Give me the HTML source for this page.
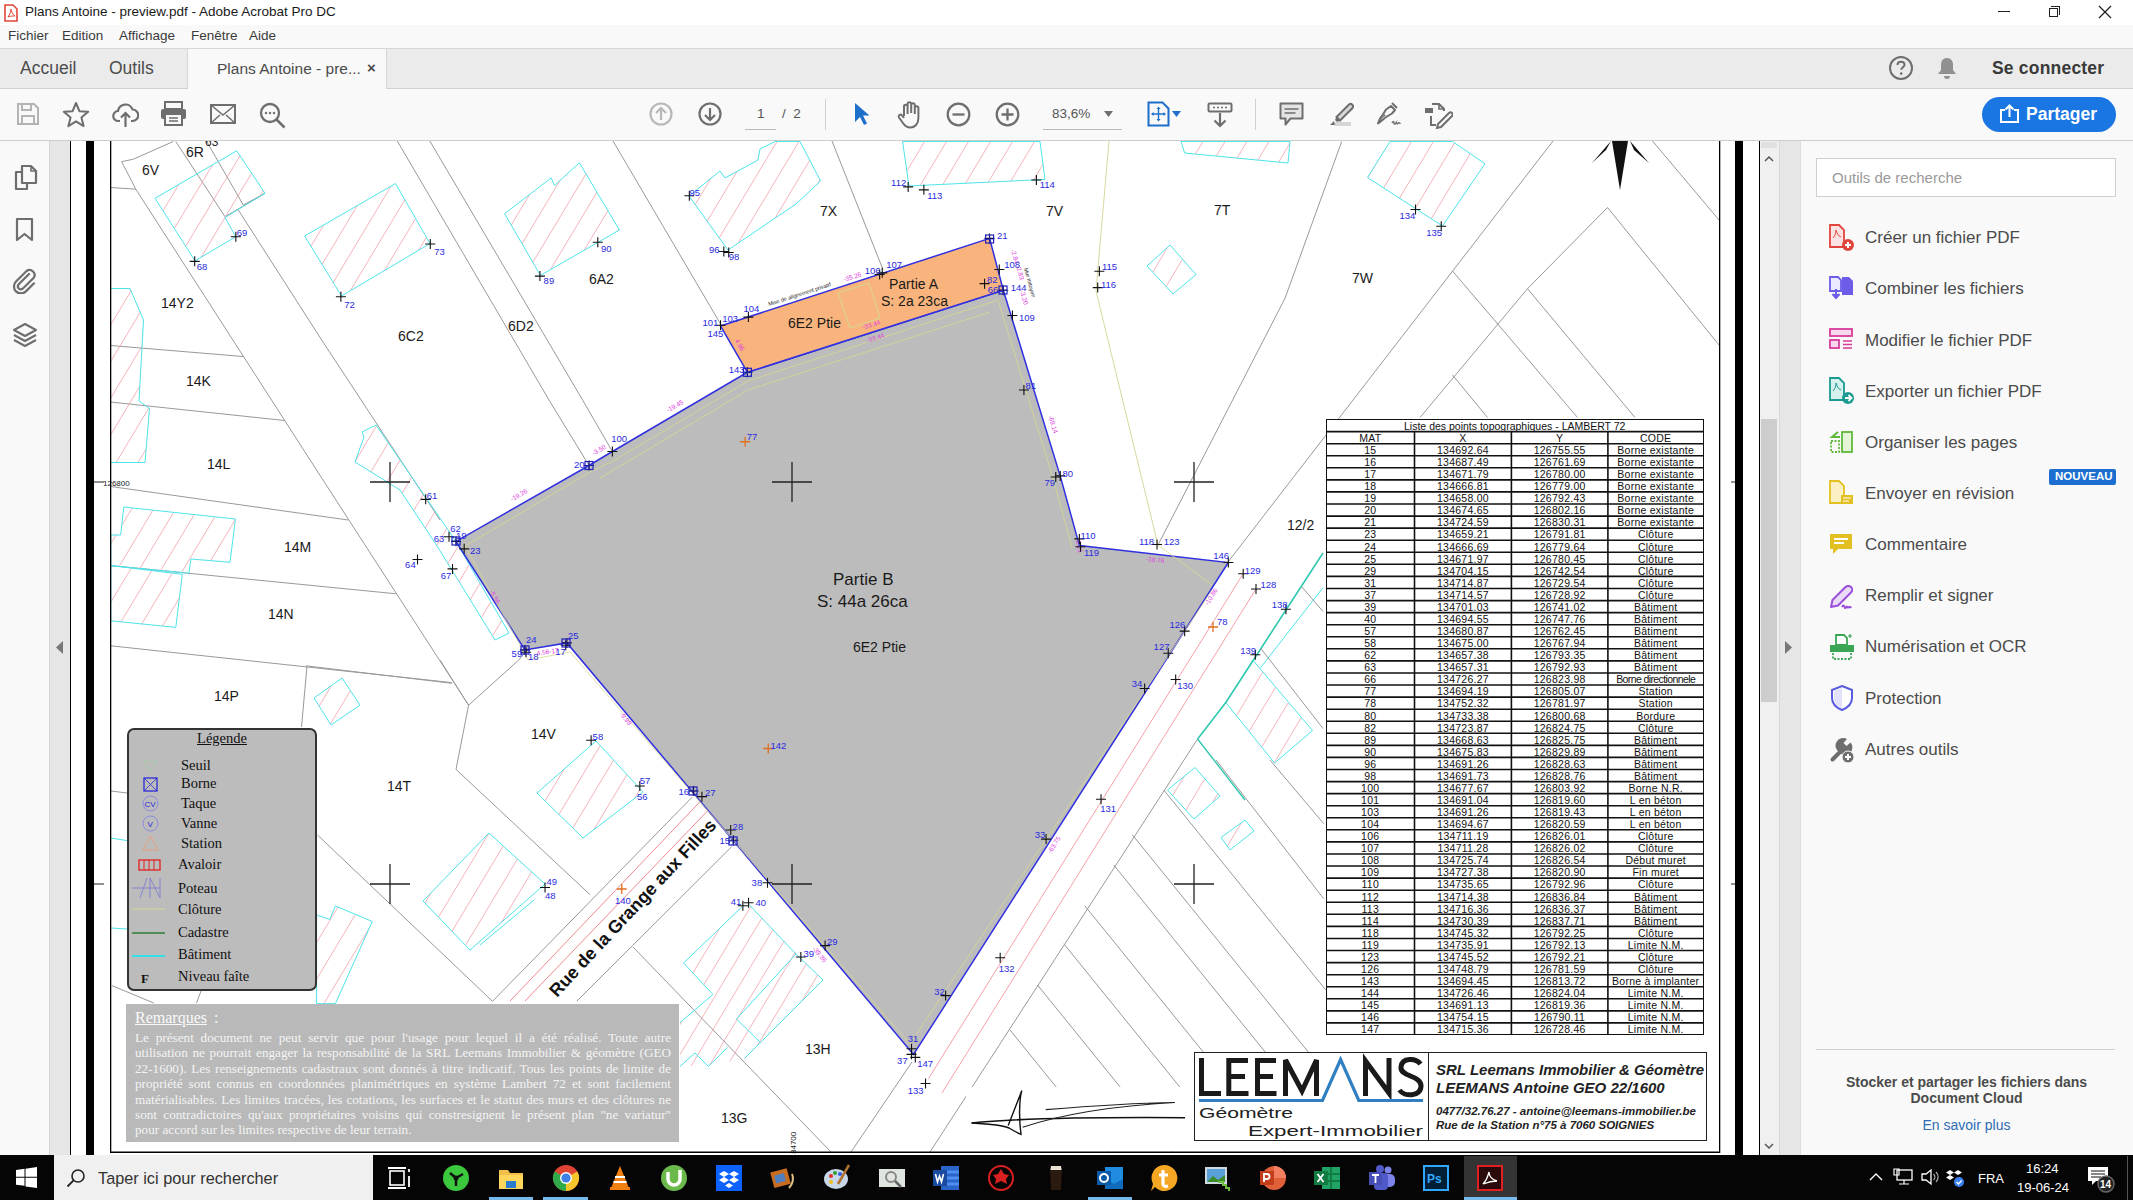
<!DOCTYPE html><html><head><meta charset="utf-8"><style>
*{margin:0;padding:0;box-sizing:border-box}
html,body{width:2133px;height:1200px;overflow:hidden;background:#f8f8f8;font-family:"Liberation Sans",sans-serif;color:#2c2c2c}
.abs{position:absolute}
.t{position:absolute;white-space:nowrap;line-height:1}

</style></head><body>
<div class="abs" style="left:0;top:0;width:2133px;height:25px;background:#ffffff"></div>
<svg class="abs" style="left:3px;top:4px" width="16" height="18" viewBox="0 0 16 18">
<path d="M2 1h8l4 4v12H2z" fill="#fff" stroke="#e0463b" stroke-width="1.6"/>
<path d="M5 13c2-3 3-6 3-8 0 2 2 6 4 7-2 0-5 0-7 1z" fill="none" stroke="#e0463b" stroke-width="1"/></svg>
<div class="t" style="left:25px;top:5px;font-size:13.5px;color:#1a1a1a">Plans Antoine - preview.pdf - Adobe Acrobat Pro DC</div>
<div class="abs" style="left:1998px;top:11px;width:12px;height:1px;background:#222"></div>
<div class="abs" style="left:2049px;top:8px;width:9px;height:9px;border:1px solid #222"></div>
<div class="abs" style="left:2051px;top:6px;width:9px;height:9px;border-top:1px solid #222;border-right:1px solid #222"></div>
<svg class="abs" style="left:2098px;top:5px" width="14" height="14"><path d="M1 1L13 13M13 1L1 13" stroke="#222" stroke-width="1.3"/></svg>
<div class="abs" style="left:0;top:25px;width:2133px;height:23px;background:#f9f9f9"></div>
<div class="t" style="left:8px;top:29px;font-size:13.5px;color:#3b3b3b">Fichier</div>
<div class="t" style="left:62px;top:29px;font-size:13.5px;color:#3b3b3b">Edition</div>
<div class="t" style="left:119px;top:29px;font-size:13.5px;color:#3b3b3b">Affichage</div>
<div class="t" style="left:191px;top:29px;font-size:13.5px;color:#3b3b3b">Fenêtre</div>
<div class="t" style="left:249px;top:29px;font-size:13.5px;color:#3b3b3b">Aide</div>
<div class="abs" style="left:0;top:48px;width:2133px;height:41px;background:#ebebeb;border-top:1px solid #d6d6d6;border-bottom:1px solid #d0d0d0"></div>
<div class="abs" style="left:187px;top:49px;width:200px;height:40px;background:#f9f9f9;border-left:1px solid #d6d6d6;border-right:1px solid #d6d6d6"></div>
<div class="t" style="left:20px;top:60px;font-size:17.5px;color:#4b4b4b">Accueil</div>
<div class="t" style="left:109px;top:60px;font-size:17.5px;color:#4b4b4b">Outils</div>
<div class="t" style="left:217px;top:61px;font-size:15.5px;color:#4b4b4b">Plans Antoine - pre...</div>
<div class="t" style="left:367px;top:60px;font-size:15px;color:#4b4b4b;font-weight:bold">×</div>
<svg class="abs" style="left:1888px;top:55px" width="26" height="26" viewBox="0 0 26 26">
<circle cx="13" cy="13" r="11" fill="none" stroke="#6e6e6e" stroke-width="2"/>
<path d="M9.5 10c0-2 1.5-3.3 3.5-3.3s3.5 1.3 3.5 3.1c0 2.4-3.3 2.4-3.3 5" fill="none" stroke="#6e6e6e" stroke-width="2"/>
<circle cx="13.2" cy="18.6" r="1.3" fill="#6e6e6e"/></svg>
<svg class="abs" style="left:1936px;top:56px" width="22" height="24" viewBox="0 0 22 24">
<path d="M11 2c-4 0-6 3-6 7v5l-3 4h18l-3-4V9c0-4-2-7-6-7z" fill="#909090"/><path d="M8 20a3 3 0 0 0 6 0z" fill="#909090"/></svg>
<div class="t" style="left:1992px;top:60px;font-size:17.5px;color:#3a3a3a;font-weight:bold;letter-spacing:0.2px">Se connecter</div>
<div class="abs" style="left:0;top:89px;width:2133px;height:52px;background:#f9f9f9;border-bottom:1px solid #cdcdcd"></div>
<svg class="abs" style="left:16px;top:102px" width="24" height="24" viewBox="0 0 24 24">
<path d="M2 2h16l4 4v16H2z" fill="none" stroke="#b4b4b4" stroke-width="2"/>
<rect x="6" y="2" width="9" height="6" fill="none" stroke="#b4b4b4" stroke-width="2"/>
<rect x="6" y="14" width="12" height="8" fill="none" stroke="#b4b4b4" stroke-width="2"/></svg>
<svg class="abs" style="left:62px;top:101px" width="28" height="27" viewBox="0 0 28 27">
<path d="M14 2l3.4 8.2 8.8.6-6.8 5.7 2.2 8.6L14 20.4 6.4 25.1l2.2-8.6L1.8 10.8l8.8-.6z" fill="none" stroke="#6e6e6e" stroke-width="2" stroke-linejoin="round"/></svg>
<svg class="abs" style="left:112px;top:102px" width="27" height="26" viewBox="0 0 27 26">
<path d="M8 19H6.5a5 5 0 0 1-.5-10 7.5 7.5 0 0 1 14.5-1.5A5.5 5.5 0 0 1 20.5 19H19" fill="none" stroke="#6e6e6e" stroke-width="2.2"/>
<path d="M13.5 25V11M9 15.5l4.5-4.5 4.5 4.5" fill="none" stroke="#6e6e6e" stroke-width="2.2"/></svg>
<svg class="abs" style="left:160px;top:101px" width="27" height="25" viewBox="0 0 27 25">
<rect x="5" y="1" width="17" height="7" fill="none" stroke="#6e6e6e" stroke-width="2"/>
<rect x="1" y="8" width="25" height="10" rx="2" fill="#6e6e6e"/>
<rect x="5" y="13" width="17" height="11" fill="#f9f9f9" stroke="#6e6e6e" stroke-width="2"/>
<path d="M9 17h9M9 20h9" stroke="#6e6e6e" stroke-width="1.3"/></svg>
<svg class="abs" style="left:210px;top:104px" width="26" height="20" viewBox="0 0 26 20">
<rect x="1" y="1" width="24" height="18" fill="none" stroke="#6e6e6e" stroke-width="2"/>
<path d="M1 1l12 10 12-10M1 19l9-8M25 19l-9-8" fill="none" stroke="#6e6e6e" stroke-width="1.5"/></svg>
<svg class="abs" style="left:259px;top:102px" width="27" height="27" viewBox="0 0 27 27">
<circle cx="11" cy="11" r="9" fill="none" stroke="#6e6e6e" stroke-width="2.3"/>
<path d="M17.5 17.5l8 8" stroke="#6e6e6e" stroke-width="2.5"/>
<circle cx="7" cy="11" r="1.2" fill="#6e6e6e"/><circle cx="11" cy="11" r="1.2" fill="#6e6e6e"/><circle cx="15" cy="11" r="1.2" fill="#6e6e6e"/></svg>
<svg class="abs" style="left:649px;top:102px" width="24" height="24" viewBox="0 0 24 24">
<circle cx="12" cy="12" r="10.5" fill="none" stroke="#b8b8b8" stroke-width="2.2"/>
<path d="M12 18V6M7 11l5-5 5 5" fill="none" stroke="#b8b8b8" stroke-width="2.2"/></svg>
<svg class="abs" style="left:698px;top:102px" width="24" height="24" viewBox="0 0 24 24">
<circle cx="12" cy="12" r="10.5" fill="none" stroke="#6e6e6e" stroke-width="2.2"/>
<path d="M12 6v12M7 13l5 5 5-5" fill="none" stroke="#6e6e6e" stroke-width="2.2"/></svg>
<div class="t" style="left:757px;top:107px;font-size:13.5px;color:#555">1</div>
<div class="abs" style="left:745px;top:129px;width:31px;height:1px;background:#bbb"></div>
<div class="t" style="left:782px;top:107px;font-size:13.5px;color:#555">/&nbsp; 2</div>
<div class="abs" style="left:825px;top:99px;width:1px;height:31px;background:#d0d0d0"></div>
<svg class="abs" style="left:853px;top:102px" width="17" height="24" viewBox="0 0 17 24">
<path d="M2 1v19l5-5 4 8 3-1.5-4-8h6.5z" fill="#1e6fc9"/></svg>
<svg class="abs" style="left:897px;top:101px" width="27" height="28" viewBox="0 0 27 28">
<path d="M7 15V5.5a1.8 1.8 0 0 1 3.6 0V13M10.6 12V3a1.8 1.8 0 0 1 3.6 0v9M14.2 12V4a1.8 1.8 0 0 1 3.6 0v8.5M17.8 13V7a1.8 1.8 0 0 1 3.6 0v10c0 6-3.5 9.5-8 9.5-3.5 0-5.5-1.5-7.5-4.5L2 16.5a1.8 1.8 0 0 1 3-2L7 17" fill="none" stroke="#6e6e6e" stroke-width="2" stroke-linejoin="round"/></svg>
<svg class="abs" style="left:946px;top:102px" width="25" height="25" viewBox="0 0 25 25">
<circle cx="12.5" cy="12.5" r="10.8" fill="none" stroke="#6e6e6e" stroke-width="2.2"/><path d="M6.5 12.5h12" stroke="#6e6e6e" stroke-width="2.3"/></svg>
<svg class="abs" style="left:995px;top:102px" width="25" height="25" viewBox="0 0 25 25">
<circle cx="12.5" cy="12.5" r="10.8" fill="none" stroke="#6e6e6e" stroke-width="2.2"/><path d="M6.5 12.5h12M12.5 6.5v12" stroke="#6e6e6e" stroke-width="2.3"/></svg>
<div class="t" style="left:1052px;top:107px;font-size:13.5px;color:#555">83,6%</div>
<svg class="abs" style="left:1104px;top:111px" width="10" height="7"><path d="M0 0h9l-4.5 6z" fill="#6e6e6e"/></svg>
<div class="abs" style="left:1043px;top:129px;width:79px;height:1px;background:#bbb"></div>
<svg class="abs" style="left:1147px;top:101px" width="24" height="26" viewBox="0 0 24 26">
<path d="M1.5 1.5h14l6 6v17h-20z" fill="none" stroke="#1e6fc9" stroke-width="2"/>
<path d="M11.5 7v12M5.5 13h12" stroke="#1e6fc9" stroke-width="1.4"/>
<path d="M11.5 5.5l-2 2.5h4zM11.5 20.5l-2-2.5h4zM4 13l2.5-2v4zM19 13l-2.5-2v4z" fill="#1e6fc9"/></svg>
<svg class="abs" style="left:1172px;top:111px" width="10" height="7"><path d="M0 0h9l-4.5 6z" fill="#1e6fc9"/></svg>
<svg class="abs" style="left:1207px;top:102px" width="26" height="26" viewBox="0 0 26 26">
<rect x="1.5" y="1.5" width="23" height="8" rx="1" fill="none" stroke="#6e6e6e" stroke-width="2"/>
<path d="M6 5.5h2M10 5.5h2M14 5.5h2M18 5.5h2" stroke="#6e6e6e" stroke-width="1.6"/>
<path d="M13 11v13M7.5 18.5l5.5 5.5 5.5-5.5" fill="none" stroke="#6e6e6e" stroke-width="2.2"/></svg>
<div class="abs" style="left:1255px;top:99px;width:1px;height:31px;background:#d0d0d0"></div>
<svg class="abs" style="left:1279px;top:102px" width="25" height="26" viewBox="0 0 25 26">
<path d="M1.5 1.5h22v15h-12l-5 6v-6h-5z" fill="#e4e4e4" stroke="#6e6e6e" stroke-width="2" stroke-linejoin="round"/>
<path d="M5.5 7h14M5.5 11h11" stroke="#6e6e6e" stroke-width="1.5"/></svg>
<svg class="abs" style="left:1327px;top:102px" width="27" height="26" viewBox="0 0 27 26">
<rect x="8" y="20" width="16" height="4" fill="#d6d6d6"/>
<path d="M22 2.5a2.5 2.5 0 0 1 3.5 3.5L13 18.5l-3.5-3.5z" fill="#d9d9d9" stroke="#6e6e6e" stroke-width="2"/>
<path d="M9.5 15l3.5 3.5-3 1.5-2-2zM7 19l-4 4h5z" fill="#6e6e6e"/></svg>
<svg class="abs" style="left:1375px;top:101px" width="28" height="26" viewBox="0 0 28 26">
<path d="M17 2l5 5" stroke="#6e6e6e" stroke-width="2"/>
<path d="M16 5l4 4-3 3.5-5 3c-3 2-6 5-9 7 1-3 3-7 5-9l3-5z" fill="none" stroke="#6e6e6e" stroke-width="2" stroke-linejoin="round"/>
<circle cx="9.5" cy="14.5" r="1" fill="#6e6e6e"/><path d="M3 22l6-7" stroke="#6e6e6e" stroke-width="1"/>
<path d="M17 22c1-2 2-2 2 0 0 2 1.5 1 2.5-0.5 0 1.5 1 1.5 2 0.5s1 1 2 0" fill="none" stroke="#6e6e6e" stroke-width="1.4"/></svg>
<svg class="abs" style="left:1424px;top:101px" width="29" height="29" viewBox="0 0 29 29">
<path d="M8 3h7l5 5v2" fill="none" stroke="#6e6e6e" stroke-width="2"/>
<path d="M15 3v5h5" fill="none" stroke="#6e6e6e" stroke-width="1.6"/>
<rect x="1" y="7" width="8" height="5" fill="#6e6e6e"/>
<path d="M7 15v9h5" fill="none" stroke="#6e6e6e" stroke-width="2"/>
<path d="M25 12a2 2 0 0 1 3 3L17 26l-4 1 1-4z" fill="none" stroke="#6e6e6e" stroke-width="2"/></svg>
<div class="abs" style="left:1982px;top:97px;width:134px;height:35px;border-radius:18px;background:#1a76e2"></div>
<svg class="abs" style="left:1999px;top:104px" width="21" height="19" viewBox="0 0 21 19">
<path d="M6 6H2v12h17V6h-4" fill="none" stroke="#fff" stroke-width="2"/>
<path d="M10.5 13V1.5M6.5 5.5l4-4 4 4" fill="none" stroke="#fff" stroke-width="2"/></svg>
<div class="t" style="left:2026px;top:106px;font-size:17.5px;color:#fff;font-weight:bold">Partager</div>
<div class="abs" style="left:0;top:141px;width:50px;height:1014px;background:#f9f9f9;border-right:1px solid #d4d4d4"></div>
<div class="abs" style="left:50px;top:141px;width:20px;height:1014px;background:#e6e6e6"></div>
<svg class="abs" style="left:56px;top:641px" width="8" height="13"><path d="M7 0v13L0 6.5z" fill="#777"/></svg>
<svg class="abs" style="left:14px;top:164px" width="24" height="27" viewBox="0 0 24 27">
<path d="M8 2h9l5 5v12H8z" fill="none" stroke="#6e6e6e" stroke-width="2.2" stroke-linejoin="round"/>
<path d="M17 2v5h5" fill="none" stroke="#6e6e6e" stroke-width="1.6"/>
<path d="M8 8H2v17h11v-6" fill="none" stroke="#6e6e6e" stroke-width="2.2" stroke-linejoin="round"/></svg>
<svg class="abs" style="left:15px;top:217px" width="20" height="26" viewBox="0 0 20 26">
<path d="M2 2h15v21l-7.5-6L2 23z" fill="none" stroke="#6e6e6e" stroke-width="2.2" stroke-linejoin="round"/></svg>
<svg class="abs" style="left:12px;top:268px" width="26" height="26" viewBox="0 0 26 26">
<path d="M17 6L6.5 16.5a3 3 0 0 0 4.2 4.2L21.5 10a5 5 0 0 0-7-7L4 13.5a7 7 0 0 0 9.9 9.9L22 15.3" fill="none" stroke="#6e6e6e" stroke-width="2.2" stroke-linecap="round"/></svg>
<svg class="abs" style="left:12px;top:322px" width="26" height="26" viewBox="0 0 26 26">
<path d="M13 2L2 8l11 6 11-6z" fill="none" stroke="#6e6e6e" stroke-width="2" stroke-linejoin="round"/>
<path d="M2 13l11 6 11-6M2 18l11 6 11-6" fill="none" stroke="#6e6e6e" stroke-width="2" stroke-linejoin="round"/></svg>
<svg class="abs" style="left:70px;top:141px" width="1690" height="1014" viewBox="70 141 1690 1014"><rect x="70" y="141" width="1690" height="1014" fill="#fff"/><path d="M135.8,189.2 L323,480 L468.6,705.2" fill="none" stroke="#999999" stroke-width="1" /><path d="M121.7,161.7 L133.3,159.2 L173.3,141.5" fill="none" stroke="#999999" stroke-width="1" /><path d="M121.7,161.7 L135.8,189.2" fill="none" stroke="#999999" stroke-width="1" /><path d="M110.8,187.5 L135.8,189.2" fill="none" stroke="#999999" stroke-width="1" /><path d="M175.8,141.5 L225,216.7 L265,193.3 L243.3,205" fill="none" stroke="#999999" stroke-width="1" /><path d="M206.7,141.5 L243.3,205" fill="none" stroke="#999999" stroke-width="1" /><path d="M238.3,210 L321.7,340 L440,520" fill="none" stroke="#999999" stroke-width="1" /><path d="M397.3,141 L549,400 L589,465.5" fill="none" stroke="#999999" stroke-width="1" /><path d="M429.8,141 L582.6,400 L612.4,451.5" fill="none" stroke="#999999" stroke-width="1" /><path d="M613,141 L721.3,325.3" fill="none" stroke="#999999" stroke-width="1" /><path d="M832,141 L883,269.6" fill="none" stroke="#999999" stroke-width="1" /><path d="M1109,141 L1096,291 L1158,545" fill="none" stroke="#d8d8a0" stroke-width="1" /><path d="M1341.7,141.5 L1285,298.3 L1158,545" fill="none" stroke="#999999" stroke-width="1" /><path d="M1553,141 L1228,562" fill="none" stroke="#999999" stroke-width="1" /><path d="M1652.5,141 L1719,220" fill="none" stroke="#999999" stroke-width="1" /><path d="M1607.5,207.5 L1719,345" fill="none" stroke="#999999" stroke-width="1" /><path d="M1607.5,207.5 L1527.5,288.7 L1420,417.5" fill="none" stroke="#999999" stroke-width="1" /><path d="M1527.5,288.7 L1635,417.5" fill="none" stroke="#999999" stroke-width="1" /><path d="M1452.5,271 L1577.5,417.5" fill="none" stroke="#999999" stroke-width="1" /><path d="M1452.5,375 L1487.5,417.5" fill="none" stroke="#999999" stroke-width="1" /><path d="M110.5,345.5 L244,356.6" fill="none" stroke="#999999" stroke-width="1" /><path d="M110.5,402 L284.5,420.5" fill="none" stroke="#999999" stroke-width="1" /><path d="M110.8,486.5 L348,520" fill="none" stroke="#999999" stroke-width="1" /><path d="M110.8,565.6 L395.8,593.75" fill="none" stroke="#999999" stroke-width="1" /><path d="M110.8,645.8 L452,682.6" fill="none" stroke="#999999" stroke-width="1" /><path d="M307,666 L301.5,727" fill="none" stroke="#999999" stroke-width="1" /><path d="M305.8,665.8 L451.7,683.3" fill="none" stroke="#999999" stroke-width="1" /><path d="M440,660 L468.6,705.2 L518.8,660 L527,650" fill="none" stroke="#999999" stroke-width="1" /><path d="M468.6,705.2 L456,769.4 L590.2,894.8" fill="none" stroke="#999999" stroke-width="1" /><path d="M317.5,835 L492.5,1001.3" fill="none" stroke="#999999" stroke-width="1" /><path d="M492.5,1001.3 L692.3,797" fill="none" stroke="#999999" stroke-width="1" /><path d="M577,1001 L731.7,846.7" fill="none" stroke="#999999" stroke-width="1" /><path d="M633,947 L831,1152" fill="none" stroke="#999999" stroke-width="1" /><path d="M1197.6,739 L930,1152" fill="none" stroke="#999999" stroke-width="1" /><path d="M1163.75,790 L1326,990.3086419753087" fill="none" stroke="#999999" stroke-width="1" /><path d="M1132.5,835 L1326,1073.888888888889" fill="none" stroke="#999999" stroke-width="1" /><path d="M1113.75,865 L1326,1127.037037037037" fill="none" stroke="#999999" stroke-width="1" /><path d="M1085,906 L1284.26,1152" fill="none" stroke="#999999" stroke-width="1" /><path d="M1063.75,943.75 L1232.4325,1152" fill="none" stroke="#999999" stroke-width="1" /><path d="M1037.5,985 L1172.77,1152" fill="none" stroke="#999999" stroke-width="1" /><path d="M1010,1030 L1108.82,1152" fill="none" stroke="#999999" stroke-width="1" /><path d="M1216,760 L1323.75,898.75" fill="none" stroke="#999999" stroke-width="1" /><path d="M1270,760 L1323.75,823.75" fill="none" stroke="#999999" stroke-width="1" /><path d="M912,1062 L851,1152" fill="none" stroke="#999999" stroke-width="1" /><clipPath id="c45"><path d="M155,198.3 L236.7,150.8 L265,193.3 L225,217.5 L235.8,236.7 L195,260.8Z"/></clipPath><path d="M89.0,260.8 L155.0,150.8 M111.0,260.8 L177.0,150.8 M133.0,260.8 L199.0,150.8 M155.0,260.8 L221.0,150.8 M177.0,260.8 L243.0,150.8 M199.0,260.8 L265.0,150.8 M221.0,260.8 L287.0,150.8 M243.0,260.8 L309.0,150.8" stroke="#f4a0a8" stroke-width="0.8" clip-path="url(#c45)"/><path d="M155,198.3 L236.7,150.8 L265,193.3 L225,217.5 L235.8,236.7 L195,260.8Z" fill="none" stroke="#4de4ea" stroke-width="1.0"/><clipPath id="c48"><path d="M304.6,236 L395.5,183.5 L430,243.5 L341.5,296Z"/></clipPath><path d="M237.1,296 L304.6,183.5 M259.1,296 L326.6,183.5 M281.1,296 L348.6,183.5 M303.1,296 L370.6,183.5 M325.1,296 L392.6,183.5 M347.1,296 L414.6,183.5 M369.1,296 L436.6,183.5 M391.1,296 L458.6,183.5 M413.1,296 L480.6,183.5" stroke="#f4a0a8" stroke-width="0.8" clip-path="url(#c48)"/><path d="M304.6,236 L395.5,183.5 L430,243.5 L341.5,296Z" fill="none" stroke="#4de4ea" stroke-width="1.0"/><clipPath id="c51"><path d="M504.6,213.7 L551.2,177.9 L554.5,185.5 L579.4,162.8 L619.4,230 L540.4,275.4Z"/></clipPath><path d="M437.0,275.4 L504.6,162.8 M459.0,275.4 L526.6,162.8 M481.0,275.4 L548.6,162.8 M503.0,275.4 L570.6,162.8 M525.0,275.4 L592.6,162.8 M547.0,275.4 L614.6,162.8 M569.0,275.4 L636.6,162.8 M591.0,275.4 L658.6,162.8 M613.0,275.4 L680.6,162.8" stroke="#f4a0a8" stroke-width="0.8" clip-path="url(#c51)"/><path d="M504.6,213.7 L551.2,177.9 L554.5,185.5 L579.4,162.8 L619.4,230 L540.4,275.4Z" fill="none" stroke="#4de4ea" stroke-width="1.0"/><clipPath id="c54"><path d="M689,196 L720,171 L725,178 L758,160 L760,149 L775,141.5 L800,141.5 L820.6,181 L796,204 L728,250Z"/></clipPath><path d="M623.9,250 L689.0,141.5 M645.9,250 L711.0,141.5 M667.9,250 L733.0,141.5 M689.9,250 L755.0,141.5 M711.9,250 L777.0,141.5 M733.9,250 L799.0,141.5 M755.9,250 L821.0,141.5 M777.9,250 L843.0,141.5 M799.9,250 L865.0,141.5" stroke="#f4a0a8" stroke-width="0.8" clip-path="url(#c54)"/><path d="M689,196 L720,171 L725,178 L758,160 L760,149 L775,141.5 L800,141.5 L820.6,181 L796,204 L728,250Z" fill="none" stroke="#4de4ea" stroke-width="1.0"/><clipPath id="c57"><path d="M902.6,141.5 L909,186 L1045,179.4 L1040,141.5Z"/></clipPath><path d="M875.9,186 L902.6,141.5 M897.9,186 L924.6,141.5 M919.9,186 L946.6,141.5 M941.9,186 L968.6,141.5 M963.9,186 L990.6,141.5 M985.9,186 L1012.6,141.5 M1007.9,186 L1034.6,141.5 M1029.9,186 L1056.6,141.5" stroke="#f4a0a8" stroke-width="0.8" clip-path="url(#c57)"/><path d="M902.6,141.5 L909,186 L1045,179.4 L1040,141.5Z" fill="none" stroke="#4de4ea" stroke-width="1.0"/><clipPath id="c60"><path d="M1181,141.5 L1184.6,153 L1288,163 L1290,141.5Z"/></clipPath><path d="M1168.1,163 L1181.0,141.5 M1190.1,163 L1203.0,141.5 M1212.1,163 L1225.0,141.5 M1234.1,163 L1247.0,141.5 M1256.1,163 L1269.0,141.5 M1278.1,163 L1291.0,141.5" stroke="#f4a0a8" stroke-width="0.8" clip-path="url(#c60)"/><path d="M1181,141.5 L1184.6,153 L1288,163 L1290,141.5Z" fill="none" stroke="#4de4ea" stroke-width="1.0"/><clipPath id="c63"><path d="M1147,266 L1170,245 L1196,274.5 L1173,294Z"/></clipPath><path d="M1117.6,294 L1147.0,245 M1139.6,294 L1169.0,245 M1161.6,294 L1191.0,245 M1183.6,294 L1213.0,245" stroke="#f4a0a8" stroke-width="0.8" clip-path="url(#c63)"/><path d="M1147,266 L1170,245 L1196,274.5 L1173,294Z" fill="none" stroke="#4de4ea" stroke-width="1.0"/><clipPath id="c66"><path d="M1367.5,177.5 L1390,141.5 L1452.5,141.5 L1485,163.75 L1442.5,226Z"/></clipPath><path d="M1316.8,226 L1367.5,141.5 M1338.8,226 L1389.5,141.5 M1360.8,226 L1411.5,141.5 M1382.8,226 L1433.5,141.5 M1404.8,226 L1455.5,141.5 M1426.8,226 L1477.5,141.5 M1448.8,226 L1499.5,141.5 M1470.8,226 L1521.5,141.5" stroke="#f4a0a8" stroke-width="0.8" clip-path="url(#c66)"/><path d="M1367.5,177.5 L1390,141.5 L1452.5,141.5 L1485,163.75 L1442.5,226Z" fill="none" stroke="#4de4ea" stroke-width="1.0"/><clipPath id="c69"><path d="M110.5,288.5 L130,288.5 L143.5,320 L139,401 L149.5,408.5 L145,462.5 L110.5,462.5Z"/></clipPath><path d="M6.1,462.5 L110.5,288.5 M28.1,462.5 L132.5,288.5 M50.1,462.5 L154.5,288.5 M72.1,462.5 L176.5,288.5 M94.1,462.5 L198.5,288.5 M116.1,462.5 L220.5,288.5 M138.1,462.5 L242.5,288.5" stroke="#f4a0a8" stroke-width="0.8" clip-path="url(#c69)"/><path d="M110.5,288.5 L130,288.5 L143.5,320 L139,401 L149.5,408.5 L145,462.5 L110.5,462.5Z" fill="none" stroke="#4de4ea" stroke-width="1.0"/><clipPath id="c72"><path d="M110.8,535 L120.6,535 L123.8,507 L235.4,519 L230,562.3 L191,559 L188.8,573.2 L110.8,565.6Z"/></clipPath><path d="M71.1,573.2 L110.8,507 M93.1,573.2 L132.8,507 M115.1,573.2 L154.8,507 M137.1,573.2 L176.8,507 M159.1,573.2 L198.8,507 M181.1,573.2 L220.8,507 M203.1,573.2 L242.8,507 M225.1,573.2 L264.8,507" stroke="#f4a0a8" stroke-width="0.8" clip-path="url(#c72)"/><path d="M110.8,535 L120.6,535 L123.8,507 L235.4,519 L230,562.3 L191,559 L188.8,573.2 L110.8,565.6Z" fill="none" stroke="#4de4ea" stroke-width="1.0"/><clipPath id="c75"><path d="M110.8,565.6 L182.3,574.3 L175.8,627.4 L110.8,620.8Z"/></clipPath><path d="M73.7,627.4 L110.8,565.6 M95.7,627.4 L132.8,565.6 M117.7,627.4 L154.8,565.6 M139.7,627.4 L176.8,565.6 M161.7,627.4 L198.8,565.6" stroke="#f4a0a8" stroke-width="0.8" clip-path="url(#c75)"/><path d="M110.8,565.6 L182.3,574.3 L175.8,627.4 L110.8,620.8Z" fill="none" stroke="#4de4ea" stroke-width="1.0"/><clipPath id="c78"><path d="M355,462 L364,437 L362,432 L376,425 L455,540 L509,633 L495,640 L437,546 L400,490Z"/></clipPath><path d="M226.0,640 L355.0,425 M248.0,640 L377.0,425 M270.0,640 L399.0,425 M292.0,640 L421.0,425 M314.0,640 L443.0,425 M336.0,640 L465.0,425 M358.0,640 L487.0,425 M380.0,640 L509.0,425 M402.0,640 L531.0,425 M424.0,640 L553.0,425 M446.0,640 L575.0,425 M468.0,640 L597.0,425 M490.0,640 L619.0,425" stroke="#f4a0a8" stroke-width="0.8" clip-path="url(#c78)"/><path d="M355,462 L364,437 L362,432 L376,425 L455,540 L509,633 L495,640 L437,546 L400,490Z" fill="none" stroke="#4de4ea" stroke-width="1.0"/><clipPath id="c81"><path d="M314,698 L342,678 L360,705 L331,725Z"/></clipPath><path d="M285.8,725 L314.0,678 M307.8,725 L336.0,678 M329.8,725 L358.0,678 M351.8,725 L380.0,678" stroke="#f4a0a8" stroke-width="0.8" clip-path="url(#c81)"/><path d="M314,698 L342,678 L360,705 L331,725Z" fill="none" stroke="#4de4ea" stroke-width="1.0"/><clipPath id="c84"><path d="M537,793 L596,741 L643,792 L583,838Z"/></clipPath><path d="M478.8,838 L537.0,741 M500.8,838 L559.0,741 M522.8,838 L581.0,741 M544.8,838 L603.0,741 M566.8,838 L625.0,741 M588.8,838 L647.0,741 M610.8,838 L669.0,741 M632.8,838 L691.0,741" stroke="#f4a0a8" stroke-width="0.8" clip-path="url(#c84)"/><path d="M537,793 L596,741 L643,792 L583,838Z" fill="none" stroke="#4de4ea" stroke-width="1.0"/><clipPath id="c87"><path d="M423,901 L489,833 L545,884 L470,950Z"/></clipPath><path d="M352.8,950 L423.0,833 M374.8,950 L445.0,833 M396.8,950 L467.0,833 M418.8,950 L489.0,833 M440.8,950 L511.0,833 M462.8,950 L533.0,833 M484.8,950 L555.0,833 M506.8,950 L577.0,833 M528.8,950 L599.0,833" stroke="#f4a0a8" stroke-width="0.8" clip-path="url(#c87)"/><path d="M423,901 L489,833 L545,884 L470,950Z" fill="none" stroke="#4de4ea" stroke-width="1.0"/><path d="M111,838 L127,840.6" fill="none" stroke="#4de4ea" stroke-width="1" /><path d="M111,928 L127,929" fill="none" stroke="#4de4ea" stroke-width="1" /><path d="M111,791 L127,793" fill="none" stroke="#999999" stroke-width="1" /><path d="M111.9,985.6 L153.8,1003" fill="none" stroke="#999999" stroke-width="1" /><path d="M196.5,1003 L201,991" fill="none" stroke="#999999" stroke-width="1" /><clipPath id="c95"><path d="M316.6,915 L329.8,919.4 L335.4,905.9 L372.3,921.5 L335.4,1003.7 L316.6,1003.7Z"/></clipPath><path d="M257.9,1003.7 L316.6,905.9 M279.9,1003.7 L338.6,905.9 M301.9,1003.7 L360.6,905.9 M323.9,1003.7 L382.6,905.9 M345.9,1003.7 L404.6,905.9 M367.9,1003.7 L426.6,905.9" stroke="#f4a0a8" stroke-width="0.8" clip-path="url(#c95)"/><path d="M316.6,915 L329.8,919.4 L335.4,905.9 L372.3,921.5 L335.4,1003.7 L316.6,1003.7Z" fill="none" stroke="#4de4ea" stroke-width="1.0"/><clipPath id="c98"><path d="M742,906 L683.6,963 L712.9,994.5 L680,1022.6 L680,1066 L708,1066 L744.4,1058.6 L823,980 L749,904.5Z"/></clipPath><path d="M583.1,1066 L680.0,904.5 M601.1,1066 L698.0,904.5 M619.1,1066 L716.0,904.5 M637.1,1066 L734.0,904.5 M655.1,1066 L752.0,904.5 M673.1,1066 L770.0,904.5 M691.1,1066 L788.0,904.5 M709.1,1066 L806.0,904.5 M727.1,1066 L824.0,904.5 M745.1,1066 L842.0,904.5 M763.1,1066 L860.0,904.5 M781.1,1066 L878.0,904.5 M799.1,1066 L896.0,904.5 M817.1,1066 L914.0,904.5" stroke="#f4a0a8" stroke-width="0.8" clip-path="url(#c98)"/><path d="M742,906.8 L683.6,963 L712.9,994.5 L680,1022.6" fill="none" stroke="#4de4ea" stroke-width="1" /><path d="M680,1066.5 L695,1053 L708.4,1066.5 L727.5,1047.4" fill="none" stroke="#4de4ea" stroke-width="1" /><path d="M749,904.5 L796,954 L736.5,1019 L761,1043" fill="none" stroke="#4de4ea" stroke-width="1" /><path d="M796,954 L823,980 L744.4,1058.6" fill="none" stroke="#4de4ea" stroke-width="1" /><path d="M480,945 L534,900" fill="none" stroke="#4de4ea" stroke-width="1" /><clipPath id="c105"><path d="M1167.5,790 L1195,767.5 L1220,796 L1194,819Z"/></clipPath><path d="M1136.6,819 L1167.5,767.5 M1158.6,819 L1189.5,767.5 M1180.6,819 L1211.5,767.5 M1202.6,819 L1233.5,767.5" stroke="#f4a0a8" stroke-width="0.8" clip-path="url(#c105)"/><path d="M1167.5,790 L1195,767.5 L1220,796 L1194,819Z" fill="none" stroke="#4de4ea" stroke-width="1.0"/><clipPath id="c108"><path d="M1221,837.5 L1245,820 L1254,831 L1230,850Z"/></clipPath><path d="M1203.0,850 L1221.0,820 M1225.0,850 L1243.0,820 M1247.0,850 L1265.0,820" stroke="#f4a0a8" stroke-width="0.8" clip-path="url(#c108)"/><path d="M1221,837.5 L1245,820 L1254,831 L1230,850Z" fill="none" stroke="#4de4ea" stroke-width="1.0"/><clipPath id="c111"><path d="M1252.9,660.2 L1312.5,730.6 L1274.5,763 L1225.8,702.5Z"/></clipPath><path d="M1164.1,763 L1225.8,660.2 M1186.1,763 L1247.8,660.2 M1208.1,763 L1269.8,660.2 M1230.1,763 L1291.8,660.2 M1252.1,763 L1313.8,660.2 M1274.1,763 L1335.8,660.2 M1296.1,763 L1357.8,660.2" stroke="#f4a0a8" stroke-width="0.8" clip-path="url(#c111)"/><path d="M1252.9,660.2 L1312.5,730.6 L1274.5,763 L1225.8,702.5Z" fill="none" stroke="#4de4ea" stroke-width="1.0"/><path d="M1323,553 L1225.8,702.5 L1197.6,739" fill="none" stroke="#30c8b0" stroke-width="1.6" /><path d="M1197.6,739 L1245,800" fill="none" stroke="#30c8b0" stroke-width="1.4" /><path d="M1323,587.6 L1260.5,667.8" fill="none" stroke="#4de4ea" stroke-width="1" /><path d="M1260.5,648 L1323,728.5" fill="none" stroke="#999999" stroke-width="1" /><path d="M1301.6,586.6 L1323,611.5" fill="none" stroke="#999999" stroke-width="1" /><path d="M510,1001 L735,765" fill="none" stroke="#f08a90" stroke-width="1" /><path d="M525,1001 L742,775" fill="none" stroke="#f08a90" stroke-width="1" /><path d="M928.5,1078.6 L1243,574" fill="none" stroke="#f4a0a8" stroke-width="1" /><path d="M942,1093 L1256,589" fill="none" stroke="#f4a0a8" stroke-width="1" /><path d="M747.4,372.3 L1003.3,290.2 L1060.2,475.9 L1079.4,545.6 L1228.3,562.5 L913.5,1054.5 L566.9,642.9 L524.9,649.9 L456,541.4 L589,465.5 L612.4,451.5Z" fill="#bcbcbc" stroke="#3030e0" stroke-width="1.5"/><path d="M615,460 L748,381 L998,300 L1053,478 L1072,548" fill="none" stroke="#d8d890" stroke-width="0.8" /><path d="M1158,545 L1212,585" fill="none" stroke="#d8d890" stroke-width="0.8" /><path d="M1212,590 L910,1044 L570,652 L528,660 L465,546 L590,472 L615,460" fill="none" stroke="#d8d890" stroke-width="0.8" /><path d="M600,478 L748,390 L990,312" fill="none" stroke="#d8d890" stroke-width="0.8" /><path d="M989.6,238.4 L1003.3,290.2 L747.4,372.3 L720.5,326Z" fill="#f8b47c" stroke="#3030e0" stroke-width="1.5"/><path d="M838,293 L869,283 L880,318 L850,328Z" fill="none" stroke="#d8d890" stroke-width="1"/><text x="0" y="0" font-size="6.5" fill="#e03ce0" font-family='"Liberation Sans",sans-serif' text-anchor="middle" transform="translate(520,497) rotate(-30)">-19.26</text><text x="0" y="0" font-size="6.5" fill="#e03ce0" font-family='"Liberation Sans",sans-serif' text-anchor="middle" transform="translate(600,452) rotate(-30)">-3.50</text><text x="0" y="0" font-size="6.5" fill="#e03ce0" font-family='"Liberation Sans",sans-serif' text-anchor="middle" transform="translate(676,408) rotate(-30)">-19.45</text><text x="0" y="0" font-size="6.5" fill="#e03ce0" font-family='"Liberation Sans",sans-serif' text-anchor="middle" transform="translate(853,279) rotate(-18)">-35.26</text><text x="0" y="0" font-size="6.5" fill="#e03ce0" font-family='"Liberation Sans",sans-serif' text-anchor="middle" transform="translate(872,327) rotate(-18)">-33.44</text><text x="0" y="0" font-size="6.5" fill="#e03ce0" font-family='"Liberation Sans",sans-serif' text-anchor="middle" transform="translate(876,340) rotate(-18)">-33.44</text><text x="0" y="0" font-size="6.5" fill="#e03ce0" font-family='"Liberation Sans",sans-serif' text-anchor="middle" transform="translate(738,346) rotate(60)">4.96</text><text x="0" y="0" font-size="6.5" fill="#e03ce0" font-family='"Liberation Sans",sans-serif' text-anchor="middle" transform="translate(1013,257) rotate(73)">-2.84</text><text x="0" y="0" font-size="6.5" fill="#e03ce0" font-family='"Liberation Sans",sans-serif' text-anchor="middle" transform="translate(1018,273) rotate(73)">-2.83</text><text x="0" y="0" font-size="6.5" fill="#e03ce0" font-family='"Liberation Sans",sans-serif' text-anchor="middle" transform="translate(1022,298) rotate(73)">-3.20</text><text x="0" y="0" font-size="6.5" fill="#e03ce0" font-family='"Liberation Sans",sans-serif' text-anchor="middle" transform="translate(1051,425) rotate(73)">-69.14</text><text x="0" y="0" font-size="6.5" fill="#e03ce0" font-family='"Liberation Sans",sans-serif' text-anchor="middle" transform="translate(1155,562) rotate(6)">-18.76</text><text x="0" y="0" font-size="6.5" fill="#e03ce0" font-family='"Liberation Sans",sans-serif' text-anchor="middle" transform="translate(1213,598) rotate(-57)">-10.86</text><text x="0" y="0" font-size="6.5" fill="#e03ce0" font-family='"Liberation Sans",sans-serif' text-anchor="middle" transform="translate(1056,846) rotate(-57)">-63.75</text><text x="0" y="0" font-size="6.5" fill="#e03ce0" font-family='"Liberation Sans",sans-serif' text-anchor="middle" transform="translate(818,956) rotate(50)">-39.86</text><text x="0" y="0" font-size="6.5" fill="#e03ce0" font-family='"Liberation Sans",sans-serif' text-anchor="middle" transform="translate(624,720) rotate(50)">-9.98</text><text x="0" y="0" font-size="6.5" fill="#e03ce0" font-family='"Liberation Sans",sans-serif' text-anchor="middle" transform="translate(493,598) rotate(58)">-5.56</text><text x="0" y="0" font-size="6.5" fill="#e03ce0" font-family='"Liberation Sans",sans-serif' text-anchor="middle" transform="translate(548,654) rotate(-8)">4.56-17</text><text x="0" y="0" font-size="6.5" fill="#e03ce0" font-family='"Liberation Sans",sans-serif' text-anchor="middle" transform="translate(1077,546) rotate(80)">-2.21</text><text x="0" y="0" font-size="5.5" fill="#222" font-family='"Liberation Sans",sans-serif' text-anchor="middle" transform="translate(800,296) rotate(-18)">Mise de alignement privatif</text><text x="0" y="0" font-size="5.5" fill="#222" font-family='"Liberation Sans",sans-serif' text-anchor="middle" transform="translate(1028,283) rotate(75)">Mur mitoyen</text><text x="889" y="289" font-size="14" fill="#1a1a1a" font-family='"Liberation Sans",sans-serif' >Partie A</text><text x="881" y="306" font-size="14" fill="#1a1a1a" font-family='"Liberation Sans",sans-serif' >S: 2a 23ca</text><text x="788" y="328" font-size="14" fill="#1a1a1a" font-family='"Liberation Sans",sans-serif' >6E2 Ptie</text><text x="833" y="585" font-size="17" fill="#1a1a1a" font-family='"Liberation Sans",sans-serif' >Partie B</text><text x="817" y="607" font-size="17" fill="#1a1a1a" font-family='"Liberation Sans",sans-serif' >S: 44a 26ca</text><text x="853" y="652" font-size="14" fill="#1a1a1a" font-family='"Liberation Sans",sans-serif' >6E2 Ptie</text><text x="142" y="175" font-size="14" fill="#1a1a1a" font-family='"Liberation Sans",sans-serif' >6V</text><text x="186" y="157" font-size="14" fill="#1a1a1a" font-family='"Liberation Sans",sans-serif' >6R</text><text x="161" y="308" font-size="14" fill="#1a1a1a" font-family='"Liberation Sans",sans-serif' >14Y2</text><text x="186" y="386" font-size="14" fill="#1a1a1a" font-family='"Liberation Sans",sans-serif' >14K</text><text x="207" y="469" font-size="14" fill="#1a1a1a" font-family='"Liberation Sans",sans-serif' >14L</text><text x="284" y="552" font-size="14" fill="#1a1a1a" font-family='"Liberation Sans",sans-serif' >14M</text><text x="268" y="619" font-size="14" fill="#1a1a1a" font-family='"Liberation Sans",sans-serif' >14N</text><text x="214" y="701" font-size="14" fill="#1a1a1a" font-family='"Liberation Sans",sans-serif' >14P</text><text x="387" y="791" font-size="14" fill="#1a1a1a" font-family='"Liberation Sans",sans-serif' >14T</text><text x="531" y="739" font-size="14" fill="#1a1a1a" font-family='"Liberation Sans",sans-serif' >14V</text><text x="398" y="341" font-size="14" fill="#1a1a1a" font-family='"Liberation Sans",sans-serif' >6C2</text><text x="508" y="331" font-size="14" fill="#1a1a1a" font-family='"Liberation Sans",sans-serif' >6D2</text><text x="589" y="284" font-size="14" fill="#1a1a1a" font-family='"Liberation Sans",sans-serif' >6A2</text><text x="820" y="216" font-size="14" fill="#1a1a1a" font-family='"Liberation Sans",sans-serif' >7X</text><text x="1046" y="216" font-size="14" fill="#1a1a1a" font-family='"Liberation Sans",sans-serif' >7V</text><text x="1214" y="215" font-size="14" fill="#1a1a1a" font-family='"Liberation Sans",sans-serif' >7T</text><text x="1352" y="283" font-size="14" fill="#1a1a1a" font-family='"Liberation Sans",sans-serif' >7W</text><text x="1287" y="530" font-size="14" fill="#1a1a1a" font-family='"Liberation Sans",sans-serif' >12/2</text><text x="805" y="1054" font-size="14" fill="#1a1a1a" font-family='"Liberation Sans",sans-serif' >13H</text><text x="721" y="1123" font-size="14" fill="#1a1a1a" font-family='"Liberation Sans",sans-serif' >13G</text><text x="205" y="146" font-size="12" fill="#1a1a1a" font-family='"Liberation Sans",sans-serif' >63</text><path d="M370,482H410M390,462V502" stroke="#222" stroke-width="1.3"/><path d="M772,482H812M792,462V502" stroke="#222" stroke-width="1.3"/><path d="M1174,482H1214M1194,462V502" stroke="#222" stroke-width="1.3"/><path d="M370,884H410M390,864V904" stroke="#222" stroke-width="1.3"/><path d="M772,884H812M792,864V904" stroke="#222" stroke-width="1.3"/><path d="M1174,884H1214M1194,864V904" stroke="#222" stroke-width="1.3"/><path d="M94,482H104M1731,482H1743M94,884H104M1731,884H1743" stroke="#222" stroke-width="1"/><text x="103" y="486" font-size="8" fill="#222" font-family='"Liberation Sans",sans-serif' >126800</text><path d="M684.36,195.76H694.36M689.36,190.76V200.76" stroke="#111" stroke-width="1.1"/><text x="689.4" y="195.8" font-size="9.5" fill="#2a2ae0" font-family='"Liberation Sans",sans-serif' >95</text><path d="M718.8,251.52H728.8M723.8,246.52V256.52" stroke="#111" stroke-width="1.1"/><text x="709.0" y="253.2" font-size="9.5" fill="#2a2ae0" font-family='"Liberation Sans",sans-serif' >96</text><path d="M723.72,252.50400000000002H733.72M728.72,247.50400000000002V257.504" stroke="#111" stroke-width="1.1"/><text x="728.7" y="259.7" font-size="9.5" fill="#2a2ae0" font-family='"Liberation Sans",sans-serif' >98</text><path d="M903.136,186.904H913.136M908.136,181.904V191.904" stroke="#111" stroke-width="1.1"/><text x="891.1" y="185.9" font-size="9.5" fill="#2a2ae0" font-family='"Liberation Sans",sans-serif' >112</text><path d="M918.88,189.856H928.88M923.88,184.856V194.856" stroke="#111" stroke-width="1.1"/><text x="927.2" y="199.0" font-size="9.5" fill="#2a2ae0" font-family='"Liberation Sans",sans-serif' >113</text><path d="M1031.384,180.016H1041.384M1036.384,175.016V185.016" stroke="#111" stroke-width="1.1"/><text x="1039.7" y="187.6" font-size="9.5" fill="#2a2ae0" font-family='"Liberation Sans",sans-serif' >114</text><path d="M984.48,238.4H994.48M989.48,233.4V243.4" stroke="#111" stroke-width="1.1"/><text x="997.0" y="239.4" font-size="9.5" fill="#2a2ae0" font-family='"Liberation Sans",sans-serif' >21</text><path d="M877.224,272.84000000000003H887.224M882.224,267.84000000000003V277.84000000000003" stroke="#111" stroke-width="1.1"/><text x="886.2" y="267.9" font-size="9.5" fill="#2a2ae0" font-family='"Liberation Sans",sans-serif' >107</text><path d="M874.6,274.48H884.6M879.6,269.48V279.48" stroke="#111" stroke-width="1.1"/><text x="864.8" y="273.5" font-size="9.5" fill="#2a2ae0" font-family='"Liberation Sans",sans-serif' >106</text><path d="M743.4,317.12H753.4M748.4,312.12V322.12" stroke="#111" stroke-width="1.1"/><text x="743.5" y="312.2" font-size="9.5" fill="#2a2ae0" font-family='"Liberation Sans",sans-serif' >104</text><path d="M715.52,325.32000000000005H725.52M720.52,320.32000000000005V330.32000000000005" stroke="#111" stroke-width="1.1"/><text x="722.2" y="322.0" font-size="9.5" fill="#2a2ae0" font-family='"Liberation Sans",sans-serif' >103</text><text x="702.5" y="326.3" font-size="9.5" fill="#2a2ae0" font-family='"Liberation Sans",sans-serif' >101</text><text x="707.4" y="336.8" font-size="9.5" fill="#2a2ae0" font-family='"Liberation Sans",sans-serif' >145</text><path d="M742.416,372.22400000000005H752.416M747.416,367.22400000000005V377.22400000000005" stroke="#111" stroke-width="1.1"/><text x="728.7" y="372.9" font-size="9.5" fill="#2a2ae0" font-family='"Liberation Sans",sans-serif' >143</text><path d="M994.3199999999999,269.56H1004.3199999999999M999.3199999999999,264.56V274.56" stroke="#111" stroke-width="1.1"/><text x="1004.2" y="267.9" font-size="9.5" fill="#2a2ae0" font-family='"Liberation Sans",sans-serif' >108</text><path d="M979.56,283.664H989.56M984.56,278.664V288.664" stroke="#111" stroke-width="1.1"/><text x="986.9" y="282.7" font-size="9.5" fill="#2a2ae0" font-family='"Liberation Sans",sans-serif' >82</text><path d="M998.2560000000001,290.22400000000005H1008.2560000000001M1003.2560000000001,285.22400000000005V295.22400000000005" stroke="#111" stroke-width="1.1"/><text x="987.8" y="292.5" font-size="9.5" fill="#2a2ae0" font-family='"Liberation Sans",sans-serif' >66</text><text x="1010.8" y="290.9" font-size="9.5" fill="#2a2ae0" font-family='"Liberation Sans",sans-serif' >144</text><path d="M1007.44,315.48H1017.44M1012.44,310.48V320.48" stroke="#111" stroke-width="1.1"/><text x="1019.0" y="321.1" font-size="9.5" fill="#2a2ae0" font-family='"Liberation Sans",sans-serif' >109</text><path d="M1018.9200000000001,389.93600000000004H1028.92M1023.9200000000001,384.93600000000004V394.93600000000004" stroke="#111" stroke-width="1.1"/><text x="1025.6" y="389.3" font-size="9.5" fill="#2a2ae0" font-family='"Liberation Sans",sans-serif' >81</text><path d="M1094.3600000000001,271.20000000000005H1104.3600000000001M1099.3600000000001,266.20000000000005V276.20000000000005" stroke="#111" stroke-width="1.1"/><text x="1102.0" y="269.6" font-size="9.5" fill="#2a2ae0" font-family='"Liberation Sans",sans-serif' >115</text><path d="M1092.72,287.6H1102.72M1097.72,282.6V292.6" stroke="#111" stroke-width="1.1"/><text x="1101.0" y="287.6" font-size="9.5" fill="#2a2ae0" font-family='"Liberation Sans",sans-serif' >116</text><path d="M740.12,441.76H750.12M745.12,436.76V446.76" stroke="#e07020" stroke-width="1.3"/><text x="746.8" y="440.1" font-size="9.5" fill="#2a2ae0" font-family='"Liberation Sans",sans-serif' >77</text><path d="M1055.25,475.875H1065.25M1060.25,470.875V480.875" stroke="#111" stroke-width="1.1"/><text x="1062.5" y="477.0" font-size="9.5" fill="#2a2ae0" font-family='"Liberation Sans",sans-serif' >80</text><path d="M1050.75,477.0H1060.75M1055.75,472.0V482.0" stroke="#111" stroke-width="1.1"/><text x="1044.5" y="486.0" font-size="9.5" fill="#2a2ae0" font-family='"Liberation Sans",sans-serif' >79</text><path d="M1074.375,538.875H1084.375M1079.375,533.875V543.875" stroke="#111" stroke-width="1.1"/><text x="1080.5" y="538.9" font-size="9.5" fill="#2a2ae0" font-family='"Liberation Sans",sans-serif' >110</text><path d="M1075.5,546.75H1085.5M1080.5,541.75V551.75" stroke="#111" stroke-width="1.1"/><text x="1083.9" y="555.8" font-size="9.5" fill="#2a2ae0" font-family='"Liberation Sans",sans-serif' >119</text><path d="M1152.0,544.5H1162.0M1157.0,539.5V549.5" stroke="#111" stroke-width="1.1"/><text x="1139.0" y="544.5" font-size="9.5" fill="#2a2ae0" font-family='"Liberation Sans",sans-serif' >118</text><text x="1163.8" y="544.5" font-size="9.5" fill="#2a2ae0" font-family='"Liberation Sans",sans-serif' >123</text><path d="M1223.325,562.5H1233.325M1228.325,557.5V567.5" stroke="#111" stroke-width="1.1"/><text x="1213.2" y="559.1" font-size="9.5" fill="#2a2ae0" font-family='"Liberation Sans",sans-serif' >146</text><path d="M1238.175,573.75H1248.175M1243.175,568.75V578.75" stroke="#111" stroke-width="1.1"/><text x="1244.8" y="573.8" font-size="9.5" fill="#2a2ae0" font-family='"Liberation Sans",sans-serif' >129</text><path d="M1251.0,589.05H1261.0M1256.0,584.05V594.05" stroke="#111" stroke-width="1.1"/><text x="1260.5" y="588.4" font-size="9.5" fill="#2a2ae0" font-family='"Liberation Sans",sans-serif' >128</text><path d="M1280.925,609.3H1290.925M1285.925,604.3V614.3" stroke="#111" stroke-width="1.1"/><text x="1271.8" y="607.5" font-size="9.5" fill="#2a2ae0" font-family='"Liberation Sans",sans-serif' >138</text><path d="M1179.675,631.125H1189.675M1184.675,626.125V636.125" stroke="#111" stroke-width="1.1"/><text x="1169.4" y="627.8" font-size="9.5" fill="#2a2ae0" font-family='"Liberation Sans",sans-serif' >126</text><path d="M1163.25,653.175H1173.25M1168.25,648.175V658.175" stroke="#111" stroke-width="1.1"/><text x="1153.6" y="649.8" font-size="9.5" fill="#2a2ae0" font-family='"Liberation Sans",sans-serif' >127</text><path d="M1250.325,654.75H1260.325M1255.325,649.75V659.75" stroke="#111" stroke-width="1.1"/><text x="1240.2" y="653.6" font-size="9.5" fill="#2a2ae0" font-family='"Liberation Sans",sans-serif' >139</text><path d="M1139.625,688.5H1149.625M1144.625,683.5V693.5" stroke="#111" stroke-width="1.1"/><text x="1131.8" y="686.7" font-size="9.5" fill="#2a2ae0" font-family='"Liberation Sans",sans-serif' >34</text><path d="M1170.675,679.5H1180.675M1175.675,674.5V684.5" stroke="#111" stroke-width="1.1"/><text x="1177.2" y="689.2" font-size="9.5" fill="#2a2ae0" font-family='"Liberation Sans",sans-serif' >130</text><path d="M607.394,451.509H617.394M612.394,446.509V456.509" stroke="#111" stroke-width="1.1"/><text x="611.2" y="442.2" font-size="9.5" fill="#2a2ae0" font-family='"Liberation Sans",sans-serif' >100</text><path d="M584.054,465.513H594.054M589.054,460.513V470.513" stroke="#111" stroke-width="1.1"/><text x="573.9" y="467.8" font-size="9.5" fill="#2a2ae0" font-family='"Liberation Sans",sans-serif' >20</text><path d="M420.674,499.356H430.674M425.674,494.356V504.356" stroke="#111" stroke-width="1.1"/><text x="426.8" y="499.4" font-size="9.5" fill="#2a2ae0" font-family='"Liberation Sans",sans-serif' >61</text><path d="M444.014,536.7H454.014M449.014,531.7V541.7" stroke="#111" stroke-width="1.1"/><text x="450.2" y="532.0" font-size="9.5" fill="#2a2ae0" font-family='"Liberation Sans",sans-serif' >62</text><text x="433.8" y="541.8" font-size="9.5" fill="#2a2ae0" font-family='"Liberation Sans",sans-serif' >63</text><path d="M451.016,541.3679999999999H461.016M456.016,536.3679999999999V546.3679999999999" stroke="#111" stroke-width="1.1"/><text x="456.0" y="539.0" font-size="9.5" fill="#2a2ae0" font-family='"Liberation Sans",sans-serif' >19</text><path d="M459.185,548.8368H469.185M464.185,543.8368V553.8368" stroke="#111" stroke-width="1.1"/><text x="470.0" y="554.2" font-size="9.5" fill="#2a2ae0" font-family='"Liberation Sans",sans-serif' >23</text><path d="M412.505,559.5732H422.505M417.505,554.5732V564.5732" stroke="#111" stroke-width="1.1"/><text x="405.1" y="568.2" font-size="9.5" fill="#2a2ae0" font-family='"Liberation Sans",sans-serif' >64</text><path d="M447.515,568.9092H457.515M452.515,563.9092V573.9092" stroke="#111" stroke-width="1.1"/><text x="440.8" y="578.7" font-size="9.5" fill="#2a2ae0" font-family='"Liberation Sans",sans-serif' >67</text><path d="M519.869,649.899H529.869M524.869,644.899V654.899" stroke="#111" stroke-width="1.1"/><text x="526.0" y="642.9" font-size="9.5" fill="#2a2ae0" font-family='"Liberation Sans",sans-serif' >24</text><text x="511.6" y="656.9" font-size="9.5" fill="#2a2ae0" font-family='"Liberation Sans",sans-serif' >59</text><path d="M521.0360000000001,652.233H531.0360000000001M526.0360000000001,647.233V657.233" stroke="#111" stroke-width="1.1"/><text x="527.9" y="660.4" font-size="9.5" fill="#2a2ae0" font-family='"Liberation Sans",sans-serif' >18</text><path d="M560.7139999999999,645.231H570.7139999999999M565.7139999999999,640.231V650.231" stroke="#111" stroke-width="1.1"/><text x="555.2" y="654.6" font-size="9.5" fill="#2a2ae0" font-family='"Liberation Sans",sans-serif' >17</text><path d="M561.881,642.8969999999999H571.881M566.881,637.8969999999999V647.8969999999999" stroke="#111" stroke-width="1.1"/><text x="568.0" y="639.4" font-size="9.5" fill="#2a2ae0" font-family='"Liberation Sans",sans-serif' >25</text><path d="M763.248,748.512H773.248M768.248,743.512V753.512" stroke="#e07020" stroke-width="1.3"/><text x="770.5" y="749.3" font-size="9.5" fill="#2a2ae0" font-family='"Liberation Sans",sans-serif' >142</text><path d="M688.585,790.96H698.585M693.585,785.96V795.96" stroke="#111" stroke-width="1.1"/><text x="678.4" y="794.8" font-size="9.5" fill="#2a2ae0" font-family='"Liberation Sans",sans-serif' >16</text><path d="M696.923,796.645H706.923M701.923,791.645V801.645" stroke="#111" stroke-width="1.1"/><text x="705.0" y="795.9" font-size="9.5" fill="#2a2ae0" font-family='"Liberation Sans",sans-serif' >27</text><path d="M725.727,829.9970000000001H735.727M730.727,824.9970000000001V834.9970000000001" stroke="#111" stroke-width="1.1"/><text x="732.6" y="830.0" font-size="9.5" fill="#2a2ae0" font-family='"Liberation Sans",sans-serif' >28</text><path d="M728.38,840.23H738.38M733.38,835.23V845.23" stroke="#111" stroke-width="1.1"/><text x="719.4" y="844.0" font-size="9.5" fill="#2a2ae0" font-family='"Liberation Sans",sans-serif' >15</text><path d="M762.49,882.678H772.49M767.49,877.678V887.678" stroke="#111" stroke-width="1.1"/><text x="751.6" y="885.7" font-size="9.5" fill="#2a2ae0" font-family='"Liberation Sans",sans-serif' >38</text><path d="M737.855,905.797H747.855M742.855,900.797V910.797" stroke="#111" stroke-width="1.1"/><text x="730.7" y="904.7" font-size="9.5" fill="#2a2ae0" font-family='"Liberation Sans",sans-serif' >41</text><path d="M743.54,902.765H753.54M748.54,897.765V907.765" stroke="#111" stroke-width="1.1"/><text x="755.4" y="905.8" font-size="9.5" fill="#2a2ae0" font-family='"Liberation Sans",sans-serif' >40</text><path d="M820.098,945.592H830.098M825.098,940.592V950.592" stroke="#111" stroke-width="1.1"/><text x="827.0" y="945.2" font-size="9.5" fill="#2a2ae0" font-family='"Liberation Sans",sans-serif' >29</text><path d="M795.842,956.962H805.842M800.842,951.962V961.962" stroke="#111" stroke-width="1.1"/><text x="803.5" y="956.6" font-size="9.5" fill="#2a2ae0" font-family='"Liberation Sans",sans-serif' >39</text><path d="M1041.055,839.093H1051.055M1046.055,834.093V844.093" stroke="#111" stroke-width="1.1"/><text x="1034.7" y="837.6" font-size="9.5" fill="#2a2ae0" font-family='"Liberation Sans",sans-serif' >33</text><path d="M1096.01,799.298H1106.01M1101.01,794.298V804.298" stroke="#111" stroke-width="1.1"/><text x="1100.3" y="811.8" font-size="9.5" fill="#2a2ae0" font-family='"Liberation Sans",sans-serif' >131</text><path d="M995.196,957.72H1005.196M1000.196,952.72V962.72" stroke="#111" stroke-width="1.1"/><text x="998.7" y="971.7" font-size="9.5" fill="#2a2ae0" font-family='"Liberation Sans",sans-serif' >132</text><path d="M940.62,995.62H950.62M945.62,990.62V1000.62" stroke="#111" stroke-width="1.1"/><text x="934.2" y="994.9" font-size="9.5" fill="#2a2ae0" font-family='"Liberation Sans",sans-serif' >32</text><path d="M906.51,1048.68H916.51M911.51,1043.68V1053.68" stroke="#111" stroke-width="1.1"/><text x="907.7" y="1042.2" font-size="9.5" fill="#2a2ae0" font-family='"Liberation Sans",sans-serif' >31</text><path d="M906.51,1054.365H916.51M911.51,1049.365V1059.365" stroke="#111" stroke-width="1.1"/><text x="897.1" y="1063.8" font-size="9.5" fill="#2a2ae0" font-family='"Liberation Sans",sans-serif' >37</text><path d="M910.3,1057.397H920.3M915.3,1052.397V1062.397" stroke="#111" stroke-width="1.1"/><text x="917.2" y="1066.9" font-size="9.5" fill="#2a2ae0" font-family='"Liberation Sans",sans-serif' >147</text><path d="M920.533,1083.548H930.533M925.533,1078.548V1088.548" stroke="#111" stroke-width="1.1"/><text x="907.7" y="1094.2" font-size="9.5" fill="#2a2ae0" font-family='"Liberation Sans",sans-serif' >133</text><path d="M586.1166000000001,740.2175H596.1166000000001M591.1166000000001,735.2175V745.2175" stroke="#111" stroke-width="1.1"/><text x="592.6" y="740.2" font-size="9.5" fill="#2a2ae0" font-family='"Liberation Sans",sans-serif' >58</text><path d="M634.8305,786.0144H644.8305M639.8305,781.0144V791.0144" stroke="#111" stroke-width="1.1"/><text x="639.8" y="784.0" font-size="9.5" fill="#2a2ae0" font-family='"Liberation Sans",sans-serif' >57</text><text x="636.9" y="800.0" font-size="9.5" fill="#2a2ae0" font-family='"Liberation Sans",sans-serif' >56</text><path d="M540.028,887.5260000000001H550.028M545.028,882.5260000000001V892.5260000000001" stroke="#111" stroke-width="1.1"/><text x="546.5" y="884.6" font-size="9.5" fill="#2a2ae0" font-family='"Liberation Sans",sans-serif' >49</text><text x="545.0" y="899.2" font-size="9.5" fill="#2a2ae0" font-family='"Liberation Sans",sans-serif' >48</text><path d="M616.7451000000001,888.9845H626.7451000000001M621.7451000000001,883.9845V893.9845" stroke="#e07020" stroke-width="1.3"/><text x="615.0" y="903.6" font-size="9.5" fill="#2a2ae0" font-family='"Liberation Sans",sans-serif' >140</text><path d="M230.8605,236.68599999999998H240.8605M235.8605,231.68599999999998V241.68599999999998" stroke="#111" stroke-width="1.1"/><text x="236.7" y="235.9" font-size="9.5" fill="#2a2ae0" font-family='"Liberation Sans",sans-serif' >69</text><path d="M189.6856,261.3576H199.6856M194.6856,256.3576V266.3576" stroke="#111" stroke-width="1.1"/><text x="196.7" y="270.0" font-size="9.5" fill="#2a2ae0" font-family='"Liberation Sans",sans-serif' >68</text><path d="M335.88149999999996,296.698H345.88149999999996M340.88149999999996,291.698V301.698" stroke="#111" stroke-width="1.1"/><text x="344.2" y="307.5" font-size="9.5" fill="#2a2ae0" font-family='"Liberation Sans",sans-serif' >72</text><path d="M425.2744,244.01600000000002H435.2744M430.2744,239.01600000000002V249.01600000000002" stroke="#111" stroke-width="1.1"/><text x="434.2" y="254.9" font-size="9.5" fill="#2a2ae0" font-family='"Liberation Sans",sans-serif' >73</text><path d="M534.9246,276.0876H544.9246M539.9246,271.0876V281.0876" stroke="#111" stroke-width="1.1"/><text x="543.6" y="284.1" font-size="9.5" fill="#2a2ae0" font-family='"Liberation Sans",sans-serif' >89</text><path d="M592.7835,242.2824H602.7835M597.7835,237.2824V247.2824" stroke="#111" stroke-width="1.1"/><text x="601.0" y="251.6" font-size="9.5" fill="#2a2ae0" font-family='"Liberation Sans",sans-serif' >90</text><path d="M1410.5,209.5H1420.5M1415.5,204.5V214.5" stroke="#111" stroke-width="1.1"/><text x="1399.5" y="218.8" font-size="9.5" fill="#2a2ae0" font-family='"Liberation Sans",sans-serif' >134</text><path d="M1436.25,226.25H1446.25M1441.25,221.25V231.25" stroke="#111" stroke-width="1.1"/><text x="1426.2" y="236.2" font-size="9.5" fill="#2a2ae0" font-family='"Liberation Sans",sans-serif' >135</text><path d="M1208,627H1218M1213,622V632" stroke="#e07020" stroke-width="1.3"/><text x="1217" y="625" font-size="9.5" fill="#2a2ae0" font-family='"Liberation Sans",sans-serif' >78</text><rect x="985.6" y="235" width="8" height="8" fill="none" stroke="#2020c0" stroke-width="1.2"/><path d="M985.6,239H993.6M989.6,235V243" stroke="#2020c0" stroke-width="0.8"/><rect x="999" y="286" width="8" height="8" fill="none" stroke="#2020c0" stroke-width="1.2"/><path d="M999,290H1007M1003,286V294" stroke="#2020c0" stroke-width="0.8"/><rect x="743.4" y="368.3" width="8" height="8" fill="none" stroke="#2020c0" stroke-width="1.2"/><path d="M743.4,372.3H751.4M747.4,368.3V376.3" stroke="#2020c0" stroke-width="0.8"/><rect x="585" y="461.5" width="8" height="8" fill="none" stroke="#2020c0" stroke-width="1.2"/><path d="M585,465.5H593M589,461.5V469.5" stroke="#2020c0" stroke-width="0.8"/><rect x="452" y="537" width="8" height="8" fill="none" stroke="#2020c0" stroke-width="1.2"/><path d="M452,541H460M456,537V545" stroke="#2020c0" stroke-width="0.8"/><rect x="521" y="646" width="8" height="8" fill="none" stroke="#2020c0" stroke-width="1.2"/><path d="M521,650H529M525,646V654" stroke="#2020c0" stroke-width="0.8"/><rect x="562" y="639" width="8" height="8" fill="none" stroke="#2020c0" stroke-width="1.2"/><path d="M562,643H570M566,639V647" stroke="#2020c0" stroke-width="0.8"/><rect x="689" y="787" width="8" height="8" fill="none" stroke="#2020c0" stroke-width="1.2"/><path d="M689,791H697M693,787V795" stroke="#2020c0" stroke-width="0.8"/><rect x="729" y="837" width="8" height="8" fill="none" stroke="#2020c0" stroke-width="1.2"/><path d="M729,841H737M733,837V845" stroke="#2020c0" stroke-width="0.8"/><text x="0" y="0" font-size="18" font-family='"Liberation Sans",sans-serif' fill="#111" font-weight="bold" transform="translate(557,998) rotate(-47)">Rue de la Grange aux Filles</text><path d="M1620,190 L1612,141 L1628,141 Z" fill="#111"/><path d="M1592,163 L1611,141 L1606,150 Z M1649,163 L1630,141 L1634,150 Z" fill="#111"/><text x="0" y="0" font-size="8" fill="#222" font-family='"Liberation Sans",sans-serif' transform="translate(796,1154) rotate(-90)">34700</text><rect x="966" y="1087" width="753" height="64.5" fill="#fff"/><rect x="70" y="141" width="1" height="1014" fill="#000"/><rect x="86" y="141" width="8" height="1014" fill="#000"/><rect x="110" y="141" width="1.3" height="1012" fill="#000"/><rect x="110" y="1151.5" width="1610" height="1.5" fill="#000"/><rect x="1719" y="141" width="1.3" height="1012" fill="#000"/><rect x="1735" y="141" width="8" height="1014" fill="#000"/><rect x="1759" y="141" width="1" height="1014" fill="#000"/></svg>
<div class="abs" style="left:127px;top:728px;width:190px;height:263px;background:#bcbcbc;border:2px solid #333;border-radius:7px"></div><div class="t" style="left:127px;width:190px;text-align:center;top:731px;font-family:'Liberation Serif',serif;font-size:14.5px;color:#111;text-decoration:underline">Légende</div><div class="t" style="left:181px;top:758px;font-family:'Liberation Serif',serif;font-size:14.5px;color:#111">Seuil</div><div class="t" style="left:181px;top:776.4px;font-family:'Liberation Serif',serif;font-size:14.5px;color:#111">Borne</div><div class="t" style="left:181px;top:796px;font-family:'Liberation Serif',serif;font-size:14.5px;color:#111">Taque</div><div class="t" style="left:181px;top:815.8px;font-family:'Liberation Serif',serif;font-size:14.5px;color:#111">Vanne</div><div class="t" style="left:181px;top:835.5px;font-family:'Liberation Serif',serif;font-size:14.5px;color:#111">Station</div><div class="t" style="left:178px;top:856.6px;font-family:'Liberation Serif',serif;font-size:14.5px;color:#111">Avaloir</div><div class="t" style="left:178px;top:880.5px;font-family:'Liberation Serif',serif;font-size:14.5px;color:#111">Poteau</div><div class="t" style="left:178px;top:901.6px;font-family:'Liberation Serif',serif;font-size:14.5px;color:#111">Clôture</div><div class="t" style="left:178px;top:925px;font-family:'Liberation Serif',serif;font-size:14.5px;color:#111">Cadastre</div><div class="t" style="left:178px;top:947.4px;font-family:'Liberation Serif',serif;font-size:14.5px;color:#111">Bâtiment</div><div class="t" style="left:178px;top:969px;font-family:'Liberation Serif',serif;font-size:14.5px;color:#111">Niveau faîte</div><svg class="abs" style="left:127px;top:728px" width="190" height="263" viewBox="127 728 190 263">
<path d="M144,761 L157,761 L150.5,772 Z" fill="none" stroke="#a8c8a8" stroke-width="1"/>
<rect x="144" y="778" width="13" height="13" fill="none" stroke="#2a2ad8" stroke-width="1.3"/><path d="M144,778L157,791M157,778L144,791" stroke="#2a2ad8" stroke-width="0.8"/>
<circle cx="150.5" cy="803.5" r="7.5" fill="none" stroke="#8a8ae0" stroke-width="1"/><text x="144.5" y="807" font-size="8" fill="#2a2ad8" font-family="Liberation Sans">CV</text>
<circle cx="150.5" cy="823.5" r="7.5" fill="none" stroke="#8a8ae0" stroke-width="1"/><text x="147.5" y="827" font-size="8" fill="#2a2ad8" font-family="Liberation Sans">V</text>
<path d="M150.5,836 L158,850 L143,850 Z" fill="none" stroke="#e8a080" stroke-width="1"/>
<rect x="139" y="860" width="21" height="10" fill="none" stroke="#e02020" stroke-width="1.3"/><path d="M144,860V870M149,860V870M154,860V870" stroke="#e02020" stroke-width="1"/>
<path d="M132,888H160M147,878L140,898M150,878V898M150,878L160,898V878" fill="none" stroke="#8080d0" stroke-width="0.9"/>
<path d="M132,909H165" stroke="#d8d890" stroke-width="1"/>
<path d="M132,933H165" stroke="#2e7d32" stroke-width="1.5"/>
<path d="M132,956H165" stroke="#33e0e6" stroke-width="2"/>
<text x="141" y="983" font-size="13" font-weight="bold" fill="#111" font-family="Liberation Serif">F</text>
</svg><div class="abs" style="left:126px;top:1004px;width:553px;height:138px;background:#b9b9b9"></div><div class="t" style="left:135px;top:1010px;font-family:'Liberation Serif',serif;font-size:16px;color:#fafafa;text-decoration:underline">Remarques</div><div class="t" style="left:214px;top:1010px;font-family:'Liberation Serif',serif;font-size:16px;color:#fafafa">:</div><div class="abs" style="left:135px;width:536px;top:1030.0px;font-family:'Liberation Serif',serif;font-size:13.2px;line-height:15px;color:#f4f4f4;white-space:nowrap;text-align:justify;text-align-last:justify;">Le présent document ne peut servir que pour l'usage pour lequel il a été réalisé. Toute autre</div><div class="abs" style="left:135px;width:536px;top:1045.4px;font-family:'Liberation Serif',serif;font-size:13.2px;line-height:15px;color:#f4f4f4;white-space:nowrap;text-align:justify;text-align-last:justify;">utilisation ne pourrait engager la responsabilité de la SRL Leemans Immobilier &amp; géomètre (GEO</div><div class="abs" style="left:135px;width:536px;top:1060.8px;font-family:'Liberation Serif',serif;font-size:13.2px;line-height:15px;color:#f4f4f4;white-space:nowrap;text-align:justify;text-align-last:justify;">22-1600). Les renseignements cadastraux sont donnés à titre indicatif. Tous les points de limite de</div><div class="abs" style="left:135px;width:536px;top:1076.2px;font-family:'Liberation Serif',serif;font-size:13.2px;line-height:15px;color:#f4f4f4;white-space:nowrap;text-align:justify;text-align-last:justify;">propriété sont connus en coordonnées planimétriques en système Lambert 72 et sont facilement</div><div class="abs" style="left:135px;width:536px;top:1091.6px;font-family:'Liberation Serif',serif;font-size:13.2px;line-height:15px;color:#f4f4f4;white-space:nowrap;text-align:justify;text-align-last:justify;">matérialisables. Les limites tracées, les cotations, les surfaces et le statut des murs et des clôtures ne</div><div class="abs" style="left:135px;width:536px;top:1107.0px;font-family:'Liberation Serif',serif;font-size:13.2px;line-height:15px;color:#f4f4f4;white-space:nowrap;text-align:justify;text-align-last:justify;">sont contradictoires qu'aux propriétaires voisins qui constresignent le présent plan "ne variatur"</div><div class="abs" style="left:135px;width:536px;top:1122.4px;font-family:'Liberation Serif',serif;font-size:13.2px;line-height:15px;color:#f4f4f4;white-space:nowrap;">pour accord sur les limites respective de leur terrain.</div><div class="abs" style="left:1326px;top:419px;width:377.5px;height:616px;background:#fff;border:1.5px solid #111"></div><svg class="abs" style="left:0;top:0" width="2133" height="1200"><path d="M1326,431.6H1703.5 M1326,443.7H1703.5 M1326,455.7H1703.5 M1326,467.8H1703.5 M1326,479.9H1703.5 M1326,491.9H1703.5 M1326,504.0H1703.5 M1326,516.1H1703.5 M1326,528.1H1703.5 M1326,540.2H1703.5 M1326,552.3H1703.5 M1326,564.3H1703.5 M1326,576.4H1703.5 M1326,588.5H1703.5 M1326,600.6H1703.5 M1326,612.6H1703.5 M1326,624.7H1703.5 M1326,636.8H1703.5 M1326,648.8H1703.5 M1326,660.9H1703.5 M1326,673.0H1703.5 M1326,685.0H1703.5 M1326,697.1H1703.5 M1326,709.2H1703.5 M1326,721.2H1703.5 M1326,733.3H1703.5 M1326,745.4H1703.5 M1326,757.4H1703.5 M1326,769.5H1703.5 M1326,781.6H1703.5 M1326,793.6H1703.5 M1326,805.7H1703.5 M1326,817.8H1703.5 M1326,829.8H1703.5 M1326,841.9H1703.5 M1326,854.0H1703.5 M1326,866.0H1703.5 M1326,878.1H1703.5 M1326,890.2H1703.5 M1326,902.3H1703.5 M1326,914.3H1703.5 M1326,926.4H1703.5 M1326,938.5H1703.5 M1326,950.5H1703.5 M1326,962.6H1703.5 M1326,974.7H1703.5 M1326,986.7H1703.5 M1326,998.8H1703.5 M1326,1010.9H1703.5 M1326,1022.9H1703.5 M1414.5,431.6V1035 M1511.4,431.6V1035 M1607.9,431.6V1035" stroke="#111" stroke-width="1.6" fill="none"/></svg><div class="t" style="left:1326px;width:377.5px;text-align:center;top:420.5px;font-size:10.5px;color:#111">Liste des points topographiques - LAMBERT 72</div><div class="t" style="left:1326px;width:88.5px;text-align:center;top:433.1px;font-size:10.5px;color:#111;letter-spacing:0.25px;">MAT</div><div class="t" style="left:1414.5px;width:96.90000000000009px;text-align:center;top:433.1px;font-size:10.5px;color:#111;letter-spacing:0.25px;">X</div><div class="t" style="left:1511.4px;width:96.5px;text-align:center;top:433.1px;font-size:10.5px;color:#111;letter-spacing:0.25px;">Y</div><div class="t" style="left:1607.9px;width:95.59999999999991px;text-align:center;top:433.1px;font-size:10.5px;color:#111;letter-spacing:0.25px;">CODE</div><div class="t" style="left:1326px;width:88.5px;text-align:center;top:445.0px;font-size:10.5px;color:#111;letter-spacing:0.25px;">15</div><div class="t" style="left:1414.5px;width:96.90000000000009px;text-align:center;top:445.0px;font-size:10.5px;color:#111;letter-spacing:0.25px;">134692.64</div><div class="t" style="left:1511.4px;width:96.5px;text-align:center;top:445.0px;font-size:10.5px;color:#111;letter-spacing:0.25px;">126755.55</div><div class="t" style="left:1607.9px;width:95.59999999999991px;text-align:center;top:445.0px;font-size:10.5px;color:#111;letter-spacing:0.25px;">Borne existante</div><div class="t" style="left:1326px;width:88.5px;text-align:center;top:457.0px;font-size:10.5px;color:#111;letter-spacing:0.25px;">16</div><div class="t" style="left:1414.5px;width:96.90000000000009px;text-align:center;top:457.0px;font-size:10.5px;color:#111;letter-spacing:0.25px;">134687.49</div><div class="t" style="left:1511.4px;width:96.5px;text-align:center;top:457.0px;font-size:10.5px;color:#111;letter-spacing:0.25px;">126761.69</div><div class="t" style="left:1607.9px;width:95.59999999999991px;text-align:center;top:457.0px;font-size:10.5px;color:#111;letter-spacing:0.25px;">Borne existante</div><div class="t" style="left:1326px;width:88.5px;text-align:center;top:469.1px;font-size:10.5px;color:#111;letter-spacing:0.25px;">17</div><div class="t" style="left:1414.5px;width:96.90000000000009px;text-align:center;top:469.1px;font-size:10.5px;color:#111;letter-spacing:0.25px;">134671.79</div><div class="t" style="left:1511.4px;width:96.5px;text-align:center;top:469.1px;font-size:10.5px;color:#111;letter-spacing:0.25px;">126780.00</div><div class="t" style="left:1607.9px;width:95.59999999999991px;text-align:center;top:469.1px;font-size:10.5px;color:#111;letter-spacing:0.25px;">Borne existante</div><div class="t" style="left:1326px;width:88.5px;text-align:center;top:481.2px;font-size:10.5px;color:#111;letter-spacing:0.25px;">18</div><div class="t" style="left:1414.5px;width:96.90000000000009px;text-align:center;top:481.2px;font-size:10.5px;color:#111;letter-spacing:0.25px;">134666.81</div><div class="t" style="left:1511.4px;width:96.5px;text-align:center;top:481.2px;font-size:10.5px;color:#111;letter-spacing:0.25px;">126779.00</div><div class="t" style="left:1607.9px;width:95.59999999999991px;text-align:center;top:481.2px;font-size:10.5px;color:#111;letter-spacing:0.25px;">Borne existante</div><div class="t" style="left:1326px;width:88.5px;text-align:center;top:493.2px;font-size:10.5px;color:#111;letter-spacing:0.25px;">19</div><div class="t" style="left:1414.5px;width:96.90000000000009px;text-align:center;top:493.2px;font-size:10.5px;color:#111;letter-spacing:0.25px;">134658.00</div><div class="t" style="left:1511.4px;width:96.5px;text-align:center;top:493.2px;font-size:10.5px;color:#111;letter-spacing:0.25px;">126792.43</div><div class="t" style="left:1607.9px;width:95.59999999999991px;text-align:center;top:493.2px;font-size:10.5px;color:#111;letter-spacing:0.25px;">Borne existante</div><div class="t" style="left:1326px;width:88.5px;text-align:center;top:505.3px;font-size:10.5px;color:#111;letter-spacing:0.25px;">20</div><div class="t" style="left:1414.5px;width:96.90000000000009px;text-align:center;top:505.3px;font-size:10.5px;color:#111;letter-spacing:0.25px;">134674.65</div><div class="t" style="left:1511.4px;width:96.5px;text-align:center;top:505.3px;font-size:10.5px;color:#111;letter-spacing:0.25px;">126802.16</div><div class="t" style="left:1607.9px;width:95.59999999999991px;text-align:center;top:505.3px;font-size:10.5px;color:#111;letter-spacing:0.25px;">Borne existante</div><div class="t" style="left:1326px;width:88.5px;text-align:center;top:517.4px;font-size:10.5px;color:#111;letter-spacing:0.25px;">21</div><div class="t" style="left:1414.5px;width:96.90000000000009px;text-align:center;top:517.4px;font-size:10.5px;color:#111;letter-spacing:0.25px;">134724.59</div><div class="t" style="left:1511.4px;width:96.5px;text-align:center;top:517.4px;font-size:10.5px;color:#111;letter-spacing:0.25px;">126830.31</div><div class="t" style="left:1607.9px;width:95.59999999999991px;text-align:center;top:517.4px;font-size:10.5px;color:#111;letter-spacing:0.25px;">Borne existante</div><div class="t" style="left:1326px;width:88.5px;text-align:center;top:529.4px;font-size:10.5px;color:#111;letter-spacing:0.25px;">23</div><div class="t" style="left:1414.5px;width:96.90000000000009px;text-align:center;top:529.4px;font-size:10.5px;color:#111;letter-spacing:0.25px;">134659.21</div><div class="t" style="left:1511.4px;width:96.5px;text-align:center;top:529.4px;font-size:10.5px;color:#111;letter-spacing:0.25px;">126791.81</div><div class="t" style="left:1607.9px;width:95.59999999999991px;text-align:center;top:529.4px;font-size:10.5px;color:#111;letter-spacing:0.25px;">Clôture</div><div class="t" style="left:1326px;width:88.5px;text-align:center;top:541.5px;font-size:10.5px;color:#111;letter-spacing:0.25px;">24</div><div class="t" style="left:1414.5px;width:96.90000000000009px;text-align:center;top:541.5px;font-size:10.5px;color:#111;letter-spacing:0.25px;">134666.69</div><div class="t" style="left:1511.4px;width:96.5px;text-align:center;top:541.5px;font-size:10.5px;color:#111;letter-spacing:0.25px;">126779.64</div><div class="t" style="left:1607.9px;width:95.59999999999991px;text-align:center;top:541.5px;font-size:10.5px;color:#111;letter-spacing:0.25px;">Clôture</div><div class="t" style="left:1326px;width:88.5px;text-align:center;top:553.6px;font-size:10.5px;color:#111;letter-spacing:0.25px;">25</div><div class="t" style="left:1414.5px;width:96.90000000000009px;text-align:center;top:553.6px;font-size:10.5px;color:#111;letter-spacing:0.25px;">134671.97</div><div class="t" style="left:1511.4px;width:96.5px;text-align:center;top:553.6px;font-size:10.5px;color:#111;letter-spacing:0.25px;">126780.45</div><div class="t" style="left:1607.9px;width:95.59999999999991px;text-align:center;top:553.6px;font-size:10.5px;color:#111;letter-spacing:0.25px;">Clôture</div><div class="t" style="left:1326px;width:88.5px;text-align:center;top:565.6px;font-size:10.5px;color:#111;letter-spacing:0.25px;">29</div><div class="t" style="left:1414.5px;width:96.90000000000009px;text-align:center;top:565.6px;font-size:10.5px;color:#111;letter-spacing:0.25px;">134704.15</div><div class="t" style="left:1511.4px;width:96.5px;text-align:center;top:565.6px;font-size:10.5px;color:#111;letter-spacing:0.25px;">126742.54</div><div class="t" style="left:1607.9px;width:95.59999999999991px;text-align:center;top:565.6px;font-size:10.5px;color:#111;letter-spacing:0.25px;">Clôture</div><div class="t" style="left:1326px;width:88.5px;text-align:center;top:577.7px;font-size:10.5px;color:#111;letter-spacing:0.25px;">31</div><div class="t" style="left:1414.5px;width:96.90000000000009px;text-align:center;top:577.7px;font-size:10.5px;color:#111;letter-spacing:0.25px;">134714.87</div><div class="t" style="left:1511.4px;width:96.5px;text-align:center;top:577.7px;font-size:10.5px;color:#111;letter-spacing:0.25px;">126729.54</div><div class="t" style="left:1607.9px;width:95.59999999999991px;text-align:center;top:577.7px;font-size:10.5px;color:#111;letter-spacing:0.25px;">Clôture</div><div class="t" style="left:1326px;width:88.5px;text-align:center;top:589.8px;font-size:10.5px;color:#111;letter-spacing:0.25px;">37</div><div class="t" style="left:1414.5px;width:96.90000000000009px;text-align:center;top:589.8px;font-size:10.5px;color:#111;letter-spacing:0.25px;">134714.57</div><div class="t" style="left:1511.4px;width:96.5px;text-align:center;top:589.8px;font-size:10.5px;color:#111;letter-spacing:0.25px;">126728.92</div><div class="t" style="left:1607.9px;width:95.59999999999991px;text-align:center;top:589.8px;font-size:10.5px;color:#111;letter-spacing:0.25px;">Clôture</div><div class="t" style="left:1326px;width:88.5px;text-align:center;top:601.9px;font-size:10.5px;color:#111;letter-spacing:0.25px;">39</div><div class="t" style="left:1414.5px;width:96.90000000000009px;text-align:center;top:601.9px;font-size:10.5px;color:#111;letter-spacing:0.25px;">134701.03</div><div class="t" style="left:1511.4px;width:96.5px;text-align:center;top:601.9px;font-size:10.5px;color:#111;letter-spacing:0.25px;">126741.02</div><div class="t" style="left:1607.9px;width:95.59999999999991px;text-align:center;top:601.9px;font-size:10.5px;color:#111;letter-spacing:0.25px;">Bâtiment</div><div class="t" style="left:1326px;width:88.5px;text-align:center;top:613.9px;font-size:10.5px;color:#111;letter-spacing:0.25px;">40</div><div class="t" style="left:1414.5px;width:96.90000000000009px;text-align:center;top:613.9px;font-size:10.5px;color:#111;letter-spacing:0.25px;">134694.55</div><div class="t" style="left:1511.4px;width:96.5px;text-align:center;top:613.9px;font-size:10.5px;color:#111;letter-spacing:0.25px;">126747.76</div><div class="t" style="left:1607.9px;width:95.59999999999991px;text-align:center;top:613.9px;font-size:10.5px;color:#111;letter-spacing:0.25px;">Bâtiment</div><div class="t" style="left:1326px;width:88.5px;text-align:center;top:626.0px;font-size:10.5px;color:#111;letter-spacing:0.25px;">57</div><div class="t" style="left:1414.5px;width:96.90000000000009px;text-align:center;top:626.0px;font-size:10.5px;color:#111;letter-spacing:0.25px;">134680.87</div><div class="t" style="left:1511.4px;width:96.5px;text-align:center;top:626.0px;font-size:10.5px;color:#111;letter-spacing:0.25px;">126762.45</div><div class="t" style="left:1607.9px;width:95.59999999999991px;text-align:center;top:626.0px;font-size:10.5px;color:#111;letter-spacing:0.25px;">Bâtiment</div><div class="t" style="left:1326px;width:88.5px;text-align:center;top:638.1px;font-size:10.5px;color:#111;letter-spacing:0.25px;">58</div><div class="t" style="left:1414.5px;width:96.90000000000009px;text-align:center;top:638.1px;font-size:10.5px;color:#111;letter-spacing:0.25px;">134675.00</div><div class="t" style="left:1511.4px;width:96.5px;text-align:center;top:638.1px;font-size:10.5px;color:#111;letter-spacing:0.25px;">126767.94</div><div class="t" style="left:1607.9px;width:95.59999999999991px;text-align:center;top:638.1px;font-size:10.5px;color:#111;letter-spacing:0.25px;">Bâtiment</div><div class="t" style="left:1326px;width:88.5px;text-align:center;top:650.1px;font-size:10.5px;color:#111;letter-spacing:0.25px;">62</div><div class="t" style="left:1414.5px;width:96.90000000000009px;text-align:center;top:650.1px;font-size:10.5px;color:#111;letter-spacing:0.25px;">134657.38</div><div class="t" style="left:1511.4px;width:96.5px;text-align:center;top:650.1px;font-size:10.5px;color:#111;letter-spacing:0.25px;">126793.35</div><div class="t" style="left:1607.9px;width:95.59999999999991px;text-align:center;top:650.1px;font-size:10.5px;color:#111;letter-spacing:0.25px;">Bâtiment</div><div class="t" style="left:1326px;width:88.5px;text-align:center;top:662.2px;font-size:10.5px;color:#111;letter-spacing:0.25px;">63</div><div class="t" style="left:1414.5px;width:96.90000000000009px;text-align:center;top:662.2px;font-size:10.5px;color:#111;letter-spacing:0.25px;">134657.31</div><div class="t" style="left:1511.4px;width:96.5px;text-align:center;top:662.2px;font-size:10.5px;color:#111;letter-spacing:0.25px;">126792.93</div><div class="t" style="left:1607.9px;width:95.59999999999991px;text-align:center;top:662.2px;font-size:10.5px;color:#111;letter-spacing:0.25px;">Bâtiment</div><div class="t" style="left:1326px;width:88.5px;text-align:center;top:674.3px;font-size:10.5px;color:#111;letter-spacing:0.25px;">66</div><div class="t" style="left:1414.5px;width:96.90000000000009px;text-align:center;top:674.3px;font-size:10.5px;color:#111;letter-spacing:0.25px;">134726.27</div><div class="t" style="left:1511.4px;width:96.5px;text-align:center;top:674.3px;font-size:10.5px;color:#111;letter-spacing:0.25px;">126823.98</div><div class="t" style="left:1607.9px;width:95.59999999999991px;text-align:center;top:674.3px;font-size:10.5px;color:#111;letter-spacing:-0.6px;">Borne directionnele</div><div class="t" style="left:1326px;width:88.5px;text-align:center;top:686.3px;font-size:10.5px;color:#111;letter-spacing:0.25px;">77</div><div class="t" style="left:1414.5px;width:96.90000000000009px;text-align:center;top:686.3px;font-size:10.5px;color:#111;letter-spacing:0.25px;">134694.19</div><div class="t" style="left:1511.4px;width:96.5px;text-align:center;top:686.3px;font-size:10.5px;color:#111;letter-spacing:0.25px;">126805.07</div><div class="t" style="left:1607.9px;width:95.59999999999991px;text-align:center;top:686.3px;font-size:10.5px;color:#111;letter-spacing:0.25px;">Station</div><div class="t" style="left:1326px;width:88.5px;text-align:center;top:698.4px;font-size:10.5px;color:#111;letter-spacing:0.25px;">78</div><div class="t" style="left:1414.5px;width:96.90000000000009px;text-align:center;top:698.4px;font-size:10.5px;color:#111;letter-spacing:0.25px;">134752.32</div><div class="t" style="left:1511.4px;width:96.5px;text-align:center;top:698.4px;font-size:10.5px;color:#111;letter-spacing:0.25px;">126781.97</div><div class="t" style="left:1607.9px;width:95.59999999999991px;text-align:center;top:698.4px;font-size:10.5px;color:#111;letter-spacing:0.25px;">Station</div><div class="t" style="left:1326px;width:88.5px;text-align:center;top:710.5px;font-size:10.5px;color:#111;letter-spacing:0.25px;">80</div><div class="t" style="left:1414.5px;width:96.90000000000009px;text-align:center;top:710.5px;font-size:10.5px;color:#111;letter-spacing:0.25px;">134733.38</div><div class="t" style="left:1511.4px;width:96.5px;text-align:center;top:710.5px;font-size:10.5px;color:#111;letter-spacing:0.25px;">126800.68</div><div class="t" style="left:1607.9px;width:95.59999999999991px;text-align:center;top:710.5px;font-size:10.5px;color:#111;letter-spacing:0.25px;">Bordure</div><div class="t" style="left:1326px;width:88.5px;text-align:center;top:722.5px;font-size:10.5px;color:#111;letter-spacing:0.25px;">82</div><div class="t" style="left:1414.5px;width:96.90000000000009px;text-align:center;top:722.5px;font-size:10.5px;color:#111;letter-spacing:0.25px;">134723.87</div><div class="t" style="left:1511.4px;width:96.5px;text-align:center;top:722.5px;font-size:10.5px;color:#111;letter-spacing:0.25px;">126824.75</div><div class="t" style="left:1607.9px;width:95.59999999999991px;text-align:center;top:722.5px;font-size:10.5px;color:#111;letter-spacing:0.25px;">Clôture</div><div class="t" style="left:1326px;width:88.5px;text-align:center;top:734.6px;font-size:10.5px;color:#111;letter-spacing:0.25px;">89</div><div class="t" style="left:1414.5px;width:96.90000000000009px;text-align:center;top:734.6px;font-size:10.5px;color:#111;letter-spacing:0.25px;">134668.63</div><div class="t" style="left:1511.4px;width:96.5px;text-align:center;top:734.6px;font-size:10.5px;color:#111;letter-spacing:0.25px;">126825.75</div><div class="t" style="left:1607.9px;width:95.59999999999991px;text-align:center;top:734.6px;font-size:10.5px;color:#111;letter-spacing:0.25px;">Bâtiment</div><div class="t" style="left:1326px;width:88.5px;text-align:center;top:746.7px;font-size:10.5px;color:#111;letter-spacing:0.25px;">90</div><div class="t" style="left:1414.5px;width:96.90000000000009px;text-align:center;top:746.7px;font-size:10.5px;color:#111;letter-spacing:0.25px;">134675.83</div><div class="t" style="left:1511.4px;width:96.5px;text-align:center;top:746.7px;font-size:10.5px;color:#111;letter-spacing:0.25px;">126829.89</div><div class="t" style="left:1607.9px;width:95.59999999999991px;text-align:center;top:746.7px;font-size:10.5px;color:#111;letter-spacing:0.25px;">Bâtiment</div><div class="t" style="left:1326px;width:88.5px;text-align:center;top:758.7px;font-size:10.5px;color:#111;letter-spacing:0.25px;">96</div><div class="t" style="left:1414.5px;width:96.90000000000009px;text-align:center;top:758.7px;font-size:10.5px;color:#111;letter-spacing:0.25px;">134691.26</div><div class="t" style="left:1511.4px;width:96.5px;text-align:center;top:758.7px;font-size:10.5px;color:#111;letter-spacing:0.25px;">126828.63</div><div class="t" style="left:1607.9px;width:95.59999999999991px;text-align:center;top:758.7px;font-size:10.5px;color:#111;letter-spacing:0.25px;">Bâtiment</div><div class="t" style="left:1326px;width:88.5px;text-align:center;top:770.8px;font-size:10.5px;color:#111;letter-spacing:0.25px;">98</div><div class="t" style="left:1414.5px;width:96.90000000000009px;text-align:center;top:770.8px;font-size:10.5px;color:#111;letter-spacing:0.25px;">134691.73</div><div class="t" style="left:1511.4px;width:96.5px;text-align:center;top:770.8px;font-size:10.5px;color:#111;letter-spacing:0.25px;">126828.76</div><div class="t" style="left:1607.9px;width:95.59999999999991px;text-align:center;top:770.8px;font-size:10.5px;color:#111;letter-spacing:0.25px;">Bâtiment</div><div class="t" style="left:1326px;width:88.5px;text-align:center;top:782.9px;font-size:10.5px;color:#111;letter-spacing:0.25px;">100</div><div class="t" style="left:1414.5px;width:96.90000000000009px;text-align:center;top:782.9px;font-size:10.5px;color:#111;letter-spacing:0.25px;">134677.67</div><div class="t" style="left:1511.4px;width:96.5px;text-align:center;top:782.9px;font-size:10.5px;color:#111;letter-spacing:0.25px;">126803.92</div><div class="t" style="left:1607.9px;width:95.59999999999991px;text-align:center;top:782.9px;font-size:10.5px;color:#111;letter-spacing:0.25px;">Borne N.R.</div><div class="t" style="left:1326px;width:88.5px;text-align:center;top:794.9px;font-size:10.5px;color:#111;letter-spacing:0.25px;">101</div><div class="t" style="left:1414.5px;width:96.90000000000009px;text-align:center;top:794.9px;font-size:10.5px;color:#111;letter-spacing:0.25px;">134691.04</div><div class="t" style="left:1511.4px;width:96.5px;text-align:center;top:794.9px;font-size:10.5px;color:#111;letter-spacing:0.25px;">126819.60</div><div class="t" style="left:1607.9px;width:95.59999999999991px;text-align:center;top:794.9px;font-size:10.5px;color:#111;letter-spacing:0.25px;">L en béton</div><div class="t" style="left:1326px;width:88.5px;text-align:center;top:807.0px;font-size:10.5px;color:#111;letter-spacing:0.25px;">103</div><div class="t" style="left:1414.5px;width:96.90000000000009px;text-align:center;top:807.0px;font-size:10.5px;color:#111;letter-spacing:0.25px;">134691.26</div><div class="t" style="left:1511.4px;width:96.5px;text-align:center;top:807.0px;font-size:10.5px;color:#111;letter-spacing:0.25px;">126819.43</div><div class="t" style="left:1607.9px;width:95.59999999999991px;text-align:center;top:807.0px;font-size:10.5px;color:#111;letter-spacing:0.25px;">L en béton</div><div class="t" style="left:1326px;width:88.5px;text-align:center;top:819.1px;font-size:10.5px;color:#111;letter-spacing:0.25px;">104</div><div class="t" style="left:1414.5px;width:96.90000000000009px;text-align:center;top:819.1px;font-size:10.5px;color:#111;letter-spacing:0.25px;">134694.67</div><div class="t" style="left:1511.4px;width:96.5px;text-align:center;top:819.1px;font-size:10.5px;color:#111;letter-spacing:0.25px;">126820.59</div><div class="t" style="left:1607.9px;width:95.59999999999991px;text-align:center;top:819.1px;font-size:10.5px;color:#111;letter-spacing:0.25px;">L en béton</div><div class="t" style="left:1326px;width:88.5px;text-align:center;top:831.1px;font-size:10.5px;color:#111;letter-spacing:0.25px;">106</div><div class="t" style="left:1414.5px;width:96.90000000000009px;text-align:center;top:831.1px;font-size:10.5px;color:#111;letter-spacing:0.25px;">134711.19</div><div class="t" style="left:1511.4px;width:96.5px;text-align:center;top:831.1px;font-size:10.5px;color:#111;letter-spacing:0.25px;">126826.01</div><div class="t" style="left:1607.9px;width:95.59999999999991px;text-align:center;top:831.1px;font-size:10.5px;color:#111;letter-spacing:0.25px;">Clôture</div><div class="t" style="left:1326px;width:88.5px;text-align:center;top:843.2px;font-size:10.5px;color:#111;letter-spacing:0.25px;">107</div><div class="t" style="left:1414.5px;width:96.90000000000009px;text-align:center;top:843.2px;font-size:10.5px;color:#111;letter-spacing:0.25px;">134711.28</div><div class="t" style="left:1511.4px;width:96.5px;text-align:center;top:843.2px;font-size:10.5px;color:#111;letter-spacing:0.25px;">126826.02</div><div class="t" style="left:1607.9px;width:95.59999999999991px;text-align:center;top:843.2px;font-size:10.5px;color:#111;letter-spacing:0.25px;">Clôture</div><div class="t" style="left:1326px;width:88.5px;text-align:center;top:855.3px;font-size:10.5px;color:#111;letter-spacing:0.25px;">108</div><div class="t" style="left:1414.5px;width:96.90000000000009px;text-align:center;top:855.3px;font-size:10.5px;color:#111;letter-spacing:0.25px;">134725.74</div><div class="t" style="left:1511.4px;width:96.5px;text-align:center;top:855.3px;font-size:10.5px;color:#111;letter-spacing:0.25px;">126826.54</div><div class="t" style="left:1607.9px;width:95.59999999999991px;text-align:center;top:855.3px;font-size:10.5px;color:#111;letter-spacing:0.25px;">Début muret</div><div class="t" style="left:1326px;width:88.5px;text-align:center;top:867.3px;font-size:10.5px;color:#111;letter-spacing:0.25px;">109</div><div class="t" style="left:1414.5px;width:96.90000000000009px;text-align:center;top:867.3px;font-size:10.5px;color:#111;letter-spacing:0.25px;">134727.38</div><div class="t" style="left:1511.4px;width:96.5px;text-align:center;top:867.3px;font-size:10.5px;color:#111;letter-spacing:0.25px;">126820.90</div><div class="t" style="left:1607.9px;width:95.59999999999991px;text-align:center;top:867.3px;font-size:10.5px;color:#111;letter-spacing:0.25px;">Fin muret</div><div class="t" style="left:1326px;width:88.5px;text-align:center;top:879.4px;font-size:10.5px;color:#111;letter-spacing:0.25px;">110</div><div class="t" style="left:1414.5px;width:96.90000000000009px;text-align:center;top:879.4px;font-size:10.5px;color:#111;letter-spacing:0.25px;">134735.65</div><div class="t" style="left:1511.4px;width:96.5px;text-align:center;top:879.4px;font-size:10.5px;color:#111;letter-spacing:0.25px;">126792.96</div><div class="t" style="left:1607.9px;width:95.59999999999991px;text-align:center;top:879.4px;font-size:10.5px;color:#111;letter-spacing:0.25px;">Clôture</div><div class="t" style="left:1326px;width:88.5px;text-align:center;top:891.5px;font-size:10.5px;color:#111;letter-spacing:0.25px;">112</div><div class="t" style="left:1414.5px;width:96.90000000000009px;text-align:center;top:891.5px;font-size:10.5px;color:#111;letter-spacing:0.25px;">134714.38</div><div class="t" style="left:1511.4px;width:96.5px;text-align:center;top:891.5px;font-size:10.5px;color:#111;letter-spacing:0.25px;">126836.84</div><div class="t" style="left:1607.9px;width:95.59999999999991px;text-align:center;top:891.5px;font-size:10.5px;color:#111;letter-spacing:0.25px;">Bâtiment</div><div class="t" style="left:1326px;width:88.5px;text-align:center;top:903.6px;font-size:10.5px;color:#111;letter-spacing:0.25px;">113</div><div class="t" style="left:1414.5px;width:96.90000000000009px;text-align:center;top:903.6px;font-size:10.5px;color:#111;letter-spacing:0.25px;">134716.36</div><div class="t" style="left:1511.4px;width:96.5px;text-align:center;top:903.6px;font-size:10.5px;color:#111;letter-spacing:0.25px;">126836.37</div><div class="t" style="left:1607.9px;width:95.59999999999991px;text-align:center;top:903.6px;font-size:10.5px;color:#111;letter-spacing:0.25px;">Bâtiment</div><div class="t" style="left:1326px;width:88.5px;text-align:center;top:915.6px;font-size:10.5px;color:#111;letter-spacing:0.25px;">114</div><div class="t" style="left:1414.5px;width:96.90000000000009px;text-align:center;top:915.6px;font-size:10.5px;color:#111;letter-spacing:0.25px;">134730.39</div><div class="t" style="left:1511.4px;width:96.5px;text-align:center;top:915.6px;font-size:10.5px;color:#111;letter-spacing:0.25px;">126837.71</div><div class="t" style="left:1607.9px;width:95.59999999999991px;text-align:center;top:915.6px;font-size:10.5px;color:#111;letter-spacing:0.25px;">Bâtiment</div><div class="t" style="left:1326px;width:88.5px;text-align:center;top:927.7px;font-size:10.5px;color:#111;letter-spacing:0.25px;">118</div><div class="t" style="left:1414.5px;width:96.90000000000009px;text-align:center;top:927.7px;font-size:10.5px;color:#111;letter-spacing:0.25px;">134745.32</div><div class="t" style="left:1511.4px;width:96.5px;text-align:center;top:927.7px;font-size:10.5px;color:#111;letter-spacing:0.25px;">126792.25</div><div class="t" style="left:1607.9px;width:95.59999999999991px;text-align:center;top:927.7px;font-size:10.5px;color:#111;letter-spacing:0.25px;">Clôture</div><div class="t" style="left:1326px;width:88.5px;text-align:center;top:939.8px;font-size:10.5px;color:#111;letter-spacing:0.25px;">119</div><div class="t" style="left:1414.5px;width:96.90000000000009px;text-align:center;top:939.8px;font-size:10.5px;color:#111;letter-spacing:0.25px;">134735.91</div><div class="t" style="left:1511.4px;width:96.5px;text-align:center;top:939.8px;font-size:10.5px;color:#111;letter-spacing:0.25px;">126792.13</div><div class="t" style="left:1607.9px;width:95.59999999999991px;text-align:center;top:939.8px;font-size:10.5px;color:#111;letter-spacing:0.25px;">Limite N.M.</div><div class="t" style="left:1326px;width:88.5px;text-align:center;top:951.8px;font-size:10.5px;color:#111;letter-spacing:0.25px;">123</div><div class="t" style="left:1414.5px;width:96.90000000000009px;text-align:center;top:951.8px;font-size:10.5px;color:#111;letter-spacing:0.25px;">134745.52</div><div class="t" style="left:1511.4px;width:96.5px;text-align:center;top:951.8px;font-size:10.5px;color:#111;letter-spacing:0.25px;">126792.21</div><div class="t" style="left:1607.9px;width:95.59999999999991px;text-align:center;top:951.8px;font-size:10.5px;color:#111;letter-spacing:0.25px;">Clôture</div><div class="t" style="left:1326px;width:88.5px;text-align:center;top:963.9px;font-size:10.5px;color:#111;letter-spacing:0.25px;">126</div><div class="t" style="left:1414.5px;width:96.90000000000009px;text-align:center;top:963.9px;font-size:10.5px;color:#111;letter-spacing:0.25px;">134748.79</div><div class="t" style="left:1511.4px;width:96.5px;text-align:center;top:963.9px;font-size:10.5px;color:#111;letter-spacing:0.25px;">126781.59</div><div class="t" style="left:1607.9px;width:95.59999999999991px;text-align:center;top:963.9px;font-size:10.5px;color:#111;letter-spacing:0.25px;">Clôture</div><div class="t" style="left:1326px;width:88.5px;text-align:center;top:976.0px;font-size:10.5px;color:#111;letter-spacing:0.25px;">143</div><div class="t" style="left:1414.5px;width:96.90000000000009px;text-align:center;top:976.0px;font-size:10.5px;color:#111;letter-spacing:0.25px;">134694.45</div><div class="t" style="left:1511.4px;width:96.5px;text-align:center;top:976.0px;font-size:10.5px;color:#111;letter-spacing:0.25px;">126813.72</div><div class="t" style="left:1607.9px;width:95.59999999999991px;text-align:center;top:976.0px;font-size:10.5px;color:#111;letter-spacing:0.25px;">Borne à implanter</div><div class="t" style="left:1326px;width:88.5px;text-align:center;top:988.0px;font-size:10.5px;color:#111;letter-spacing:0.25px;">144</div><div class="t" style="left:1414.5px;width:96.90000000000009px;text-align:center;top:988.0px;font-size:10.5px;color:#111;letter-spacing:0.25px;">134726.46</div><div class="t" style="left:1511.4px;width:96.5px;text-align:center;top:988.0px;font-size:10.5px;color:#111;letter-spacing:0.25px;">126824.04</div><div class="t" style="left:1607.9px;width:95.59999999999991px;text-align:center;top:988.0px;font-size:10.5px;color:#111;letter-spacing:0.25px;">Limite N.M.</div><div class="t" style="left:1326px;width:88.5px;text-align:center;top:1000.1px;font-size:10.5px;color:#111;letter-spacing:0.25px;">145</div><div class="t" style="left:1414.5px;width:96.90000000000009px;text-align:center;top:1000.1px;font-size:10.5px;color:#111;letter-spacing:0.25px;">134691.13</div><div class="t" style="left:1511.4px;width:96.5px;text-align:center;top:1000.1px;font-size:10.5px;color:#111;letter-spacing:0.25px;">126819.36</div><div class="t" style="left:1607.9px;width:95.59999999999991px;text-align:center;top:1000.1px;font-size:10.5px;color:#111;letter-spacing:0.25px;">Limite N.M.</div><div class="t" style="left:1326px;width:88.5px;text-align:center;top:1012.2px;font-size:10.5px;color:#111;letter-spacing:0.25px;">146</div><div class="t" style="left:1414.5px;width:96.90000000000009px;text-align:center;top:1012.2px;font-size:10.5px;color:#111;letter-spacing:0.25px;">134754.15</div><div class="t" style="left:1511.4px;width:96.5px;text-align:center;top:1012.2px;font-size:10.5px;color:#111;letter-spacing:0.25px;">126790.11</div><div class="t" style="left:1607.9px;width:95.59999999999991px;text-align:center;top:1012.2px;font-size:10.5px;color:#111;letter-spacing:0.25px;">Limite N.M.</div><div class="t" style="left:1326px;width:88.5px;text-align:center;top:1024.2px;font-size:10.5px;color:#111;letter-spacing:0.25px;">147</div><div class="t" style="left:1414.5px;width:96.90000000000009px;text-align:center;top:1024.2px;font-size:10.5px;color:#111;letter-spacing:0.25px;">134715.36</div><div class="t" style="left:1511.4px;width:96.5px;text-align:center;top:1024.2px;font-size:10.5px;color:#111;letter-spacing:0.25px;">126728.46</div><div class="t" style="left:1607.9px;width:95.59999999999991px;text-align:center;top:1024.2px;font-size:10.5px;color:#111;letter-spacing:0.25px;">Limite N.M.</div><div class="abs" style="left:1194px;top:1052px;width:513px;height:89px;background:#fff;border:1.5px solid #222"></div><div class="abs" style="left:1427.5px;top:1052px;width:1.5px;height:89px;background:#222"></div><svg class="abs" style="left:1194px;top:1052px" width="234" height="89" viewBox="1194 1052 234 89">
<path d="M1201.5,1058 V1093.5 H1221 M1248,1060.5 H1228.8 V1093.5 H1248.5 M1228.8,1076.5 H1245 M1276,1060.5 H1257.5 V1093.5 H1276.5 M1257.5,1076.5 H1273 M1285.5,1096 V1060 L1302,1091 L1316.5,1060 V1096 M1365.5,1096 V1061 L1389,1093 V1058 M1420.5,1064 C1416,1058 1402,1057 1401,1067 C1400,1077 1421,1075 1421,1086 C1421,1097 1404,1097 1399.5,1090" fill="none" stroke="#1a1a1a" stroke-width="5"/>
<path d="M1199,1100.5 H1322.5 L1340.6,1059.5 L1358.8,1100.5 H1423" fill="none" stroke="#2f7fc1" stroke-width="3.2" stroke-linejoin="miter"/>
<text x="1199" y="1118" font-size="14.5" font-family="Liberation Sans" fill="#222" textLength="94" lengthAdjust="spacingAndGlyphs">Géomètre</text>
<text x="1248" y="1136" font-size="14.5" font-family="Liberation Sans" fill="#222" textLength="175" lengthAdjust="spacingAndGlyphs">Expert-Immobilier</text>
</svg><div class="t" style="left:1436px;top:1062px;font-size:15px;font-style:italic;font-weight:bold;color:#222">SRL Leemans Immobilier &amp; Géomètre</div><div class="t" style="left:1436px;top:1080px;font-size:15px;font-style:italic;font-weight:bold;color:#222">LEEMANS Antoine GEO 22/1600</div><div class="t" style="left:1436px;top:1106px;font-size:11.5px;font-style:italic;font-weight:bold;color:#222">0477/32.76.27 - antoine@leemans-immobilier.be</div><div class="t" style="left:1436px;top:1120px;font-size:11.5px;font-style:italic;font-weight:bold;color:#222">Rue de la Station n°75 à 7060 SOIGNIES</div><svg class="abs" style="left:960px;top:1080px" width="240" height="60" viewBox="960 1080 240 60">
<path d="M971.6,1123 C1010,1119 1080,1117 1185,1117.7" fill="none" stroke="#111" stroke-width="1.6"/>
<path d="M971.6,1123 C990,1124 1003,1125 1009,1128 C1014,1131 1018,1133 1021,1134.4 C1019,1120 1019,1100 1021.8,1090.6 C1017,1103 1012,1116 1008.2,1125.6" fill="none" stroke="#111" stroke-width="1.4"/>
<path d="M1022.6,1127.2 C1060,1115 1110,1106 1174.8,1102.5 C1140,1103 1090,1106 1045.7,1109.7" fill="none" stroke="#222" stroke-width="1.2"/>
</svg>
<div class="abs" style="left:1760px;top:141px;width:19px;height:1014px;background:#f0f0f0"></div>
<div class="abs" style="left:1761px;top:419px;width:16px;height:283px;background:#cdcdcd"></div>
<div class="abs" style="left:1761px;top:142px;width:16px;height:6px;background:#e0e0e0"></div>
<svg class="abs" style="left:1764px;top:155px" width="10" height="7"><path d="M1 6l4-4 4 4" fill="none" stroke="#555" stroke-width="1.5"/></svg>
<svg class="abs" style="left:1764px;top:1143px" width="10" height="7"><path d="M1 1l4 4 4-4" fill="none" stroke="#555" stroke-width="1.5"/></svg>
<div class="abs" style="left:1779px;top:141px;width:21px;height:1014px;background:#e6e6e6;border-left:1px solid #d8d8d8"></div>
<svg class="abs" style="left:1785px;top:641px" width="8" height="13"><path d="M0 0v13l7-6.5z" fill="#777"/></svg>
<div class="abs" style="left:1800px;top:141px;width:333px;height:1014px;background:#f9f9f9;border-left:1px solid #dcdcdc"></div>
<div class="abs" style="left:1816px;top:158px;width:300px;height:39px;background:#fff;border:1px solid #cfcfcf"></div>
<div class="t" style="left:1832px;top:170px;font-size:15px;color:#9a9a9a">Outils de recherche</div>
<div class="t" style="left:1865px;top:229.2px;font-size:17px;color:#4b4b4b">Créer un fichier PDF</div>
<div class="t" style="left:1865px;top:280.3px;font-size:17px;color:#4b4b4b">Combiner les fichiers</div>
<div class="t" style="left:1865px;top:331.5px;font-size:17px;color:#4b4b4b">Modifier le fichier PDF</div>
<div class="t" style="left:1865px;top:382.6px;font-size:17px;color:#4b4b4b">Exporter un fichier PDF</div>
<div class="t" style="left:1865px;top:433.8px;font-size:17px;color:#4b4b4b">Organiser les pages</div>
<div class="t" style="left:1865px;top:484.9px;font-size:17px;color:#4b4b4b">Envoyer en révision</div>
<div class="t" style="left:1865px;top:536.1px;font-size:17px;color:#4b4b4b">Commentaire</div>
<div class="t" style="left:1865px;top:587.2px;font-size:17px;color:#4b4b4b">Remplir et signer</div>
<div class="t" style="left:1865px;top:638.4px;font-size:17px;color:#4b4b4b">Numérisation et OCR</div>
<div class="t" style="left:1865px;top:689.5px;font-size:17px;color:#4b4b4b">Protection</div>
<div class="t" style="left:1865px;top:740.7px;font-size:17px;color:#4b4b4b">Autres outils</div>
<div class="abs" style="left:2049px;top:469px;width:67px;height:16px;background:#1c6fd0;border-radius:2px"></div>
<div class="t" style="left:2055px;top:471px;font-size:11.5px;color:#fff;font-weight:bold">NOUVEAU</div>
<svg class="abs" style="left:1828px;top:224.0px" width="28" height="28" viewBox="0 0 28 28"><path d="M2 1h9l5 5v17H2z" fill="#fbe3e3" stroke="#e0443e" stroke-width="1.8"/><path d="M5 14c2-2 3-5 3-8 1 3 2 6 5 7" fill="none" stroke="#e0443e" stroke-width="1"/><circle cx="20" cy="21" r="6" fill="#e0443e"/><path d="M20 18v6M17 21h6" stroke="#fff" stroke-width="2"/></svg>
<svg class="abs" style="left:1828px;top:275.1px" width="28" height="28" viewBox="0 0 28 28"><path d="M2 2h8l3 3v11H2z" fill="#eceafe" stroke="#6c5ce7" stroke-width="1.8"/><path d="M14 2h7l4 4v14H14z" fill="#6c5ce7"/><path d="M8 14v8M4.5 19l3.5 4 3.5-4" fill="#6c5ce7" stroke="#6c5ce7" stroke-width="2"/></svg>
<svg class="abs" style="left:1828px;top:326.3px" width="28" height="28" viewBox="0 0 28 28"><rect x="2" y="3" width="22" height="7" fill="#f8d8ec" stroke="#d83b9b" stroke-width="1.8"/><rect x="2" y="14" width="9" height="8" fill="#f8d8ec" stroke="#d83b9b" stroke-width="1.8"/><path d="M15 15h9M15 18.5h9M15 22h9" stroke="#d83b9b" stroke-width="1.4"/></svg>
<svg class="abs" style="left:1828px;top:377.4px" width="28" height="28" viewBox="0 0 28 28"><path d="M2 1h9l5 5v17H2z" fill="#d6f0ee" stroke="#1a9a90" stroke-width="1.8"/><path d="M5 14c2-2 3-5 3-8 1 3 2 6 5 7" fill="none" stroke="#1a9a90" stroke-width="1"/><circle cx="20" cy="21" r="6" fill="#1a9a90"/><path d="M17 21h6M20.5 18l3 3-3 3" fill="none" stroke="#fff" stroke-width="1.8"/></svg>
<svg class="abs" style="left:1828px;top:428.6px" width="28" height="28" viewBox="0 0 28 28"><rect x="14" y="3" width="10" height="20" fill="#e3f5d6" stroke="#5fb83a" stroke-width="1.8"/><path d="M3 12h8v11H3z" fill="none" stroke="#5fb83a" stroke-width="1.8" stroke-dasharray="2 1.5"/><path d="M10 3L4 8h8" fill="none" stroke="#5fb83a" stroke-width="2"/></svg>
<svg class="abs" style="left:1828px;top:479.8px" width="28" height="28" viewBox="0 0 28 28"><path d="M2 1h9l5 5v17H2z" fill="#fbf0c4" stroke="#e3c021" stroke-width="1.8"/><rect x="13" y="15" width="12" height="9" fill="#e3c021"/><path d="M15 18h8M15 21h6" stroke="#fff" stroke-width="1.2"/></svg>
<svg class="abs" style="left:1828px;top:530.9px" width="28" height="28" viewBox="0 0 28 28"><path d="M2 3h22v15H10l-5 5v-5H2z" fill="#e3c021"/><path d="M6 8h14M6 12h10" stroke="#fff" stroke-width="1.8"/></svg>
<svg class="abs" style="left:1828px;top:582.0px" width="28" height="28" viewBox="0 0 28 28"><path d="M3 25 L4.5 18 L17.5 5 C19 3.5 21.5 3.5 23 5 C24.5 6.5 24.5 9 23 10.5 L10 23.5 Z" fill="#eadcf8" stroke="#9b4ddc" stroke-width="2" stroke-linejoin="round"/><path d="M14 25c1-2 2-2 2.5 0s1.5 1 2.5-1c0 2 1 2 2 1s1 1 2.5 0" fill="none" stroke="#9b4ddc" stroke-width="1.8"/></svg>
<svg class="abs" style="left:1828px;top:633.2px" width="28" height="28" viewBox="0 0 28 28"><path d="M8 2h8l3 3v7H8z" fill="#fff" stroke="#3aa655" stroke-width="1.8"/><rect x="2" y="12" width="24" height="7" fill="#3aa655"/><path d="M5 20v6h18v-6" fill="none" stroke="#3aa655" stroke-width="1.8" stroke-dasharray="2 1.5"/><path d="M22 1v4M20 3h4" stroke="#3aa655" stroke-width="1.2"/></svg>
<svg class="abs" style="left:1828px;top:684.3px" width="28" height="28" viewBox="0 0 28 28"><path d="M14 2l10 4v8c0 6-5 10-10 12C9 24 4 20 4 14V6z" fill="#fff" stroke="#5a5ce0" stroke-width="2"/><path d="M14 4v20C9 22 6 19 6 14V7z" fill="#e1e1fb"/></svg>
<svg class="abs" style="left:1828px;top:735.5px" width="28" height="28" viewBox="0 0 28 28"><path d="M4.5 23.5 L13 15" stroke="#6e6e6e" stroke-width="4" stroke-linecap="round"/><path d="M11.5 16.5 A6.5 6.5 0 0 1 19 3 L15.5 7 L18.5 10 L22.5 6.5 A6.5 6.5 0 0 1 11.5 16.5Z" fill="#6e6e6e"/><circle cx="20" cy="21" r="6" fill="#6e6e6e" stroke="#f9f9f9" stroke-width="1"/><path d="M20 18v6M17 21h6" stroke="#fff" stroke-width="2"/></svg>
<div class="abs" style="left:1816px;top:1049px;width:299px;height:1px;background:#d0d0d0"></div>
<div class="t" style="left:1800px;width:333px;text-align:center;top:1074px;font-size:14px;line-height:16px;color:#4b4b4b;font-weight:bold">Stocker et partager les fichiers dans<br>Document Cloud</div>
<div class="t" style="left:1800px;width:333px;text-align:center;top:1118px;font-size:14px;color:#2d6cb5">En savoir plus</div>
<div class="abs" style="left:0;top:1155px;width:2133px;height:45px;background:#050505"></div>
<svg class="abs" style="left:16px;top:1167px" width="21" height="21" viewBox="0 0 21 21">
<path d="M0 3l8.5-1.2v8H0zM9.5 1.7L21 0v9.8H9.5zM0 10.8h8.5v8L0 17.7zM9.5 10.8H21V21l-11.5-1.6z" fill="#fff"/></svg>
<div class="abs" style="left:54px;top:1155px;width:319px;height:45px;background:#f0f0f0"></div>
<svg class="abs" style="left:66px;top:1168px" width="20" height="20" viewBox="0 0 20 20">
<circle cx="12" cy="8" r="6" fill="none" stroke="#222" stroke-width="1.6"/><path d="M7.8 12.2L1.5 18.5" stroke="#222" stroke-width="1.8"/></svg>
<div class="t" style="left:98px;top:1170px;font-size:16.3px;color:#333">Taper ici pour rechercher</div>
<div class="abs" style="left:1464px;top:1156px;width:53px;height:44px;background:#343434"></div>
<div class="abs" style="left:489px;top:1197px;width:44px;height:3px;background:#76b9ed"></div>
<div class="abs" style="left:543px;top:1197px;width:45px;height:3px;background:#76b9ed"></div>
<div class="abs" style="left:1088px;top:1197px;width:44px;height:3px;background:#76b9ed"></div>
<div class="abs" style="left:1464px;top:1197px;width:53px;height:3px;background:#76b9ed"></div>
<svg class="abs" style="left:385.5px;top:1163.5px" width="28" height="28" viewBox="0 0 28 28"><rect x="4" y="7" width="14" height="14" fill="none" stroke="#fff" stroke-width="1.6"/><path d="M2 4h18M2 24h18M23 5v3M23 12v11" stroke="#fff" stroke-width="1.8"/></svg>
<svg class="abs" style="left:442.4px;top:1163.5px" width="28" height="28" viewBox="0 0 28 28"><circle cx="14" cy="14" r="13" fill="#3cc83c"/><path d="M14 14L8 9M14 14l7-4M14 14v8" stroke="#111" stroke-width="2.5"/><circle cx="14" cy="14" r="2.5" fill="#111"/></svg>
<svg class="abs" style="left:496.6px;top:1163.5px" width="28" height="28" viewBox="0 0 28 28"><path d="M2 6h9l2 3h13v16H2z" fill="#f0c048"/><path d="M2 11h24v14H2z" fill="#ffd65c"/><rect x="9" y="17" width="10" height="7" fill="#2a7ad0"/></svg>
<svg class="abs" style="left:551.5px;top:1163.5px" width="28" height="28" viewBox="0 0 28 28"><circle cx="14" cy="14" r="13" fill="#e04434"/><path d="M14 14L2.7 7.5A13 13 0 0 0 14 27z" fill="#2faa4b"/><path d="M14 14V27A13 13 0 0 0 25.3 7.5z" fill="#f7c52c"/><circle cx="14" cy="14" r="6" fill="#fff"/><circle cx="14" cy="14" r="4.6" fill="#3f7fe8"/></svg>
<svg class="abs" style="left:605.8px;top:1163.5px" width="28" height="28" viewBox="0 0 28 28"><path d="M14 2l9 22H5z" fill="#f08010"/><path d="M9 13h10M7.5 18h13" stroke="#fff" stroke-width="2.2"/><rect x="4" y="23" width="20" height="3" fill="#f08010"/></svg>
<svg class="abs" style="left:660.4px;top:1163.5px" width="28" height="28" viewBox="0 0 28 28"><circle cx="14" cy="14" r="13" fill="#6ab94a"/><path d="M8 8v7a6 6 0 0 0 12 0V6" fill="none" stroke="#fff" stroke-width="3.5"/></svg>
<svg class="abs" style="left:714.6px;top:1163.5px" width="28" height="28" viewBox="0 0 28 28"><rect x="1" y="1" width="26" height="26" fill="#0d62fe"/><path d="M9 7l5 3-5 3-5-3zM19 7l5 3-5 3-5-3zM9 13l5 3-5 3-5-3zM19 13l5 3-5 3-5-3zM14 19l4 2.5-4 2.5-4-2.5z" fill="#fff"/></svg>
<svg class="abs" style="left:769.0px;top:1163.5px" width="28" height="28" viewBox="0 0 28 28"><rect x="3" y="6" width="17" height="16" fill="#c86c20" transform="rotate(-15 12 14)"/><rect x="6" y="10" width="10" height="8" fill="#5080c0" transform="rotate(-15 12 14)"/><path d="M20 24c4-4 5-10 3-14" fill="none" stroke="#e0c080" stroke-width="2"/></svg>
<svg class="abs" style="left:823.0px;top:1163.5px" width="28" height="28" viewBox="0 0 28 28"><ellipse cx="13" cy="15" rx="12" ry="10" fill="#c8d8e8"/><circle cx="8" cy="12" r="2" fill="#e03030"/><circle cx="12" cy="9" r="2" fill="#30a030"/><circle cx="17" cy="10" r="2" fill="#3060e0"/><circle cx="8" cy="18" r="2" fill="#f0c020"/><path d="M26 1L15 20" stroke="#b07030" stroke-width="2.5"/></svg>
<svg class="abs" style="left:877.8px;top:1163.5px" width="28" height="28" viewBox="0 0 28 28"><rect x="1" y="5" width="26" height="18" fill="#dfe6e0"/><circle cx="13" cy="13" r="5" fill="none" stroke="#888" stroke-width="2"/><path d="M17 17l6 6" stroke="#666" stroke-width="2.5"/></svg>
<svg class="abs" style="left:932.0px;top:1163.5px" width="28" height="28" viewBox="0 0 28 28"><rect x="9" y="2" width="18" height="24" fill="#2b64c8"/><path d="M9 8h18M9 14h18M9 20h18" stroke="#4d8ef0" stroke-width="3"/><rect x="1" y="6" width="14" height="16" fill="#1a4aa0"/><path d="M3.5 10l2 8 2-6 2 6 2-8" fill="none" stroke="#fff" stroke-width="1.6"/></svg>
<svg class="abs" style="left:986.8px;top:1163.5px" width="28" height="28" viewBox="0 0 28 28"><circle cx="14" cy="14" r="12" fill="none" stroke="#d82020" stroke-width="2"/><path d="M14 5l3 5 5 1-3 4 1 5-6-3-6 3 1-5-3-4 5-1z" fill="#d82020"/></svg>
<svg class="abs" style="left:1041.6px;top:1163.5px" width="28" height="28" viewBox="0 0 28 28"><path d="M9 2h10l1 5-1 19H9L8 7z" fill="#2a1a10"/><path d="M9 2h10l.6 4H8.4z" fill="#e8e0d0"/></svg>
<svg class="abs" style="left:1095.6px;top:1163.5px" width="28" height="28" viewBox="0 0 28 28"><rect x="9" y="3" width="18" height="21" fill="#1f8ce0"/><path d="M9 15l9 5 9-5v10H9z" fill="#0f6cbd"/><rect x="1" y="7" width="14" height="14" fill="#0a5aa8"/><circle cx="8" cy="14" r="4" fill="none" stroke="#fff" stroke-width="2"/></svg>
<svg class="abs" style="left:1150.0px;top:1163.5px" width="28" height="28" viewBox="0 0 28 28"><path d="M14 1a13 13 0 1 1-9 22l-4 4 2-7A13 13 0 0 1 14 1z" fill="#f5a623"/><path d="M13 6v14c0 2 2 3 5 2M9 11h9" fill="none" stroke="#fff" stroke-width="3.2"/></svg>
<svg class="abs" style="left:1204.0px;top:1163.5px" width="28" height="28" viewBox="0 0 28 28"><rect x="1" y="3" width="22" height="17" fill="#d0d8e0"/><rect x="3" y="5" width="18" height="13" fill="#5aa0d8"/><path d="M3 18l6-6 5 4 7-5v7z" fill="#3a8a2a"/><path d="M14 18h5v3h3v3h3v3" fill="none" stroke="#6abe40" stroke-width="2"/></svg>
<svg class="abs" style="left:1258.0px;top:1163.5px" width="28" height="28" viewBox="0 0 28 28"><circle cx="16" cy="14" r="12" fill="#e0603a"/><path d="M16 2a12 12 0 0 1 12 12H16z" fill="#f08060"/><rect x="2" y="7" width="14" height="14" fill="#c43e1c"/><path d="M6 18V10h3a2.5 2.5 0 0 1 0 5H6" fill="none" stroke="#fff" stroke-width="1.8"/></svg>
<svg class="abs" style="left:1313.0px;top:1163.5px" width="28" height="28" viewBox="0 0 28 28"><rect x="9" y="3" width="18" height="22" fill="#21a366"/><path d="M9 10h18M9 17h18M18 3v22" stroke="#107c41" stroke-width="2"/><rect x="1" y="7" width="14" height="14" fill="#107c41"/><path d="M4.5 10l6 8M10.5 10l-6 8" stroke="#fff" stroke-width="1.8"/></svg>
<svg class="abs" style="left:1368.0px;top:1163.5px" width="28" height="28" viewBox="0 0 28 28"><circle cx="20" cy="6" r="3.5" fill="#7b83eb"/><rect x="14" y="10" width="13" height="13" rx="5" fill="#7b83eb"/><circle cx="12" cy="5" r="4" fill="#5059c9"/><rect x="6" y="9" width="14" height="17" rx="4" fill="#5059c9"/><rect x="1" y="8" width="13" height="13" fill="#464eb8"/><path d="M4 11h7M7.5 11v8" stroke="#fff" stroke-width="1.8"/></svg>
<svg class="abs" style="left:1422.0px;top:1163.5px" width="28" height="28" viewBox="0 0 28 28"><rect x="2" y="2" width="24" height="24" fill="#001e36" stroke="#31a8ff" stroke-width="2"/><text x="5" y="19" font-size="12" font-family="Liberation Sans" font-weight="bold" fill="#31a8ff">Ps</text></svg>
<svg class="abs" style="left:1476.0px;top:1163.5px" width="28" height="28" viewBox="0 0 28 28"><rect x="2" y="2" width="24" height="24" fill="#2a0a0a" stroke="#e02020" stroke-width="2"/><path d="M7 20c3-3 5-8 6-12 0 4 3 8 8 9-4 0-9 1-14 3z" fill="none" stroke="#fff" stroke-width="1.3"/></svg>
<svg class="abs" style="left:1869px;top:1172px" width="14" height="9"><path d="M1 8l6-6 6 6" fill="none" stroke="#fff" stroke-width="1.4"/></svg>
<svg class="abs" style="left:1893px;top:1168px" width="20" height="18" viewBox="0 0 20 18"><rect x="4" y="2" width="15" height="10" fill="none" stroke="#fff" stroke-width="1.3"/><path d="M11 12v4M6 16h10M1 1h5v6H1z" fill="none" stroke="#fff" stroke-width="1.2"/></svg>
<svg class="abs" style="left:1920px;top:1167px" width="20" height="20" viewBox="0 0 20 20"><path d="M2 7h4l5-4v14l-5-4H2z" fill="none" stroke="#fff" stroke-width="1.3"/><path d="M13.5 7a4 4 0 0 1 0 6M16 5a7 7 0 0 1 0 10" fill="none" stroke="#aaa" stroke-width="1.2"/></svg>
<svg class="abs" style="left:1946px;top:1168px" width="20" height="20" viewBox="0 0 20 20"><path d="M4 2l4 2.5-4 2.5-4-2.5zM12 2l4 2.5-4 2.5-4-2.5zM4 7l4 2.5-4 2.5-4-2.5z" fill="#fff"/><circle cx="13" cy="14" r="5" fill="#3b82f6"/><path d="M10.5 14l2 2 3-3.5" fill="none" stroke="#fff" stroke-width="1.3"/></svg>
<div class="t" style="left:1978px;top:1172px;font-size:13px;color:#fff">FRA</div>
<div class="t" style="left:2026px;top:1162px;font-size:13px;color:#fff">16:24</div>
<div class="t" style="left:2017px;top:1181px;font-size:13px;color:#fff">19-06-24</div>
<svg class="abs" style="left:2086px;top:1164px" width="30" height="30" viewBox="0 0 30 30"><path d="M2 3h20v14H10l-4 4v-4H2z" fill="#fff"/><path d="M5 7h14M5 10h14M5 13h10" stroke="#111" stroke-width="1.2"/><circle cx="20" cy="20" r="8" fill="#222" stroke="#666" stroke-width="1.5"/><text x="14" y="24" font-size="10" font-weight="bold" font-family="Liberation Sans" fill="#fff">14</text></svg>
<div class="abs" style="left:2127px;top:1156px;width:1px;height:44px;background:#555"></div>
</body></html>
